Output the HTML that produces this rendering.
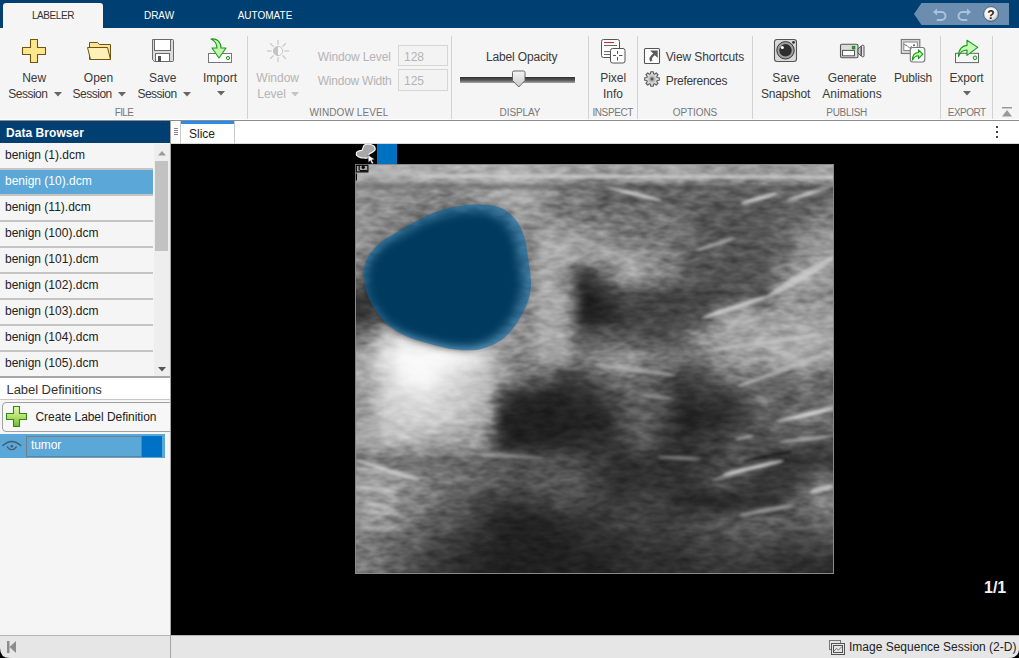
<!DOCTYPE html>
<html><head><meta charset="utf-8"><title>Medical Image Labeler</title>
<style>
html,body{margin:0;padding:0;}
body{width:1019px;height:658px;overflow:hidden;position:relative;background:#f5f5f5;font-family:"Liberation Sans", sans-serif;}
svg{display:block}
</style></head><body>
<div style="position:absolute;left:0px;top:0px;width:1019px;height:28px;background:#003f72"></div>
<div style="position:absolute;left:3px;top:3px;width:100px;height:25px;background:#f5f5f5;border-radius:3px 3px 0 0"></div>
<div style="position:absolute;left:-147.0px;width:400px;top:10.54px;font-size:10px;line-height:10px;color:#333;font-weight:normal;letter-spacing:-0.4px;text-align:center;white-space:nowrap;">LABELER</div>
<div style="position:absolute;left:-41.0px;width:400px;top:10.54px;font-size:10px;line-height:10px;color:#fff;font-weight:normal;letter-spacing:0px;text-align:center;white-space:nowrap;">DRAW</div>
<div style="position:absolute;left:65.0px;width:400px;top:10.54px;font-size:10px;line-height:10px;color:#fff;font-weight:normal;letter-spacing:0px;text-align:center;white-space:nowrap;">AUTOMATE</div>
<svg style="position:absolute;left:0;top:0" width="1019" height="28">
<polygon points="914,14 921.5,3 1009,3 1009,25 921.5,25" fill="#6a8db0"/>
<g fill="none" stroke="#a9c3db" stroke-width="2" stroke-linecap="round">
<path d="M935.5,12 h6 a4,4 0 0 1 0,8 h-4"/>
<path d="M968.5,12 h-6 a4,4 0 0 0 0,8 h4"/>
</g>
<path d="M933,12 l4,-3.5 v7z" fill="#a9c3db"/>
<path d="M971,12 l-4,-3.5 v7z" fill="#a9c3db"/>
<defs><radialGradient id="hg" cx="0.4" cy="0.35" r="0.7"><stop offset="0" stop-color="#ffffff"/><stop offset="0.7" stop-color="#e8e8e8"/><stop offset="1" stop-color="#9aa4ae"/></radialGradient></defs>
<circle cx="991" cy="14" r="7.3" fill="url(#hg)" stroke="#1d3550" stroke-width="0.6"/>
<text x="991" y="18.6" font-family="Liberation Sans" font-weight="bold" font-size="12" text-anchor="middle" fill="#222">?</text>
</svg>
<div style="position:absolute;left:0px;top:28px;width:1019px;height:92px;background:#f5f5f5"></div>
<div style="position:absolute;left:0px;top:119px;width:1019px;height:1px;background:#ffffff"></div>
<div style="position:absolute;left:0px;top:120px;width:1019px;height:1px;background:#8c8c8c"></div>
<div style="position:absolute;left:247px;top:36px;width:1px;height:83px;background:#d2d2d2"></div>
<div style="position:absolute;left:451px;top:36px;width:1px;height:83px;background:#d2d2d2"></div>
<div style="position:absolute;left:588px;top:36px;width:1px;height:83px;background:#d2d2d2"></div>
<div style="position:absolute;left:637px;top:36px;width:1px;height:83px;background:#d2d2d2"></div>
<div style="position:absolute;left:752px;top:36px;width:1px;height:83px;background:#d2d2d2"></div>
<div style="position:absolute;left:940px;top:36px;width:1px;height:83px;background:#d2d2d2"></div>
<div style="position:absolute;left:992px;top:36px;width:1px;height:83px;background:#d2d2d2"></div>
<div style="position:absolute;left:-76.0px;width:400px;top:108.23px;font-size:10px;line-height:10px;color:#777;font-weight:normal;letter-spacing:-0.6px;text-align:center;white-space:nowrap;">FILE</div>
<div style="position:absolute;left:149.0px;width:400px;top:108.23px;font-size:10px;line-height:10px;color:#777;font-weight:normal;letter-spacing:0.1px;text-align:center;white-space:nowrap;">WINDOW LEVEL</div>
<div style="position:absolute;left:320.0px;width:400px;top:108.23px;font-size:10px;line-height:10px;color:#777;font-weight:normal;letter-spacing:-0.1px;text-align:center;white-space:nowrap;">DISPLAY</div>
<div style="position:absolute;left:412.7px;width:400px;top:108.23px;font-size:10px;line-height:10px;color:#777;font-weight:normal;letter-spacing:-0.4px;text-align:center;white-space:nowrap;">INSPECT</div>
<div style="position:absolute;left:495.0px;width:400px;top:108.23px;font-size:10px;line-height:10px;color:#777;font-weight:normal;letter-spacing:-0.1px;text-align:center;white-space:nowrap;">OPTIONS</div>
<div style="position:absolute;left:646.7px;width:400px;top:108.23px;font-size:10px;line-height:10px;color:#777;font-weight:normal;letter-spacing:-0.3px;text-align:center;white-space:nowrap;">PUBLISH</div>
<div style="position:absolute;left:766.7px;width:400px;top:108.23px;font-size:10px;line-height:10px;color:#777;font-weight:normal;letter-spacing:-0.5px;text-align:center;white-space:nowrap;">EXPORT</div>
<div style="position:absolute;left:-165.8px;width:400px;top:71.64px;font-size:12px;line-height:12px;color:#3a3a3a;font-weight:normal;letter-spacing:0px;text-align:center;white-space:nowrap;">New</div>
<div style="position:absolute;left:-172.2px;width:400px;top:87.64px;font-size:12px;line-height:12px;color:#3a3a3a;font-weight:normal;letter-spacing:-0.5px;text-align:center;white-space:nowrap;">Session</div>
<svg style="position:absolute;left:54px;top:92px" width="9" height="5"><polygon points="0,0 8,0 4,4.5" fill="#666"/></svg>
<div style="position:absolute;left:-101.5px;width:400px;top:71.64px;font-size:12px;line-height:12px;color:#3a3a3a;font-weight:normal;letter-spacing:0px;text-align:center;white-space:nowrap;">Open</div>
<div style="position:absolute;left:-107.8px;width:400px;top:87.64px;font-size:12px;line-height:12px;color:#3a3a3a;font-weight:normal;letter-spacing:-0.5px;text-align:center;white-space:nowrap;">Session</div>
<svg style="position:absolute;left:118px;top:92px" width="9" height="5"><polygon points="0,0 8,0 4,4.5" fill="#666"/></svg>
<div style="position:absolute;left:-37.3px;width:400px;top:71.64px;font-size:12px;line-height:12px;color:#3a3a3a;font-weight:normal;letter-spacing:0px;text-align:center;white-space:nowrap;">Save</div>
<div style="position:absolute;left:-43.0px;width:400px;top:87.64px;font-size:12px;line-height:12px;color:#3a3a3a;font-weight:normal;letter-spacing:-0.5px;text-align:center;white-space:nowrap;">Session</div>
<svg style="position:absolute;left:183px;top:92px" width="9" height="5"><polygon points="0,0 8,0 4,4.5" fill="#666"/></svg>
<div style="position:absolute;left:20.0px;width:400px;top:71.64px;font-size:12px;line-height:12px;color:#3a3a3a;font-weight:normal;letter-spacing:0px;text-align:center;white-space:nowrap;">Import</div>
<svg style="position:absolute;left:217px;top:91px" width="9" height="5"><polygon points="0,0 8,0 4,4.5" fill="#666"/></svg>
<div style="position:absolute;left:77.7px;width:400px;top:71.64px;font-size:12px;line-height:12px;color:#b4b4b4;font-weight:normal;letter-spacing:0px;text-align:center;white-space:nowrap;">Window</div>
<div style="position:absolute;left:71.6px;width:400px;top:87.64px;font-size:12px;line-height:12px;color:#b4b4b4;font-weight:normal;letter-spacing:0px;text-align:center;white-space:nowrap;">Level</div>
<svg style="position:absolute;left:291px;top:92px" width="9" height="5"><polygon points="0,0 8,0 4,4.5" fill="#c4c4c4"/></svg>
<div style="position:absolute;left:317.8px;top:50.94px;font-size:12px;line-height:12px;color:#b4b4b4;font-weight:normal;letter-spacing:-0.15px;white-space:nowrap;">Window Level</div>
<div style="position:absolute;left:317.8px;top:74.84px;font-size:12px;line-height:12px;color:#b4b4b4;font-weight:normal;letter-spacing:-0.25px;white-space:nowrap;">Window Width</div>
<div style="position:absolute;left:398px;top:45px;width:50px;height:21px;border:1px solid #d6d6d6;box-sizing:border-box;background:#f3f3f3"></div>
<div style="position:absolute;left:398px;top:69px;width:50px;height:22px;border:1px solid #d6d6d6;box-sizing:border-box;background:#f3f3f3"></div>
<div style="position:absolute;left:404.0px;top:50.84px;font-size:12px;line-height:12px;color:#b4b4b4;font-weight:normal;letter-spacing:0px;white-space:nowrap;">128</div>
<div style="position:absolute;left:404.0px;top:74.84px;font-size:12px;line-height:12px;color:#b4b4b4;font-weight:normal;letter-spacing:0px;white-space:nowrap;">125</div>
<div style="position:absolute;left:321.7px;width:400px;top:51.04px;font-size:12px;line-height:12px;color:#3a3a3a;font-weight:normal;letter-spacing:-0.15px;text-align:center;white-space:nowrap;">Label Opacity</div>
<div style="position:absolute;left:413.2px;width:400px;top:71.64px;font-size:12px;line-height:12px;color:#3a3a3a;font-weight:normal;letter-spacing:0px;text-align:center;white-space:nowrap;">Pixel</div>
<div style="position:absolute;left:413.0px;width:400px;top:87.64px;font-size:12px;line-height:12px;color:#3a3a3a;font-weight:normal;letter-spacing:0px;text-align:center;white-space:nowrap;">Info</div>
<div style="position:absolute;left:665.7px;top:50.84px;font-size:12px;line-height:12px;color:#3a3a3a;font-weight:normal;letter-spacing:-0.1px;white-space:nowrap;">View Shortcuts</div>
<div style="position:absolute;left:665.7px;top:74.84px;font-size:12px;line-height:12px;color:#3a3a3a;font-weight:normal;letter-spacing:-0.3px;white-space:nowrap;">Preferences</div>
<div style="position:absolute;left:586.0px;width:400px;top:71.64px;font-size:12px;line-height:12px;color:#3a3a3a;font-weight:normal;letter-spacing:0px;text-align:center;white-space:nowrap;">Save</div>
<div style="position:absolute;left:585.5px;width:400px;top:87.64px;font-size:12px;line-height:12px;color:#3a3a3a;font-weight:normal;letter-spacing:-0.2px;text-align:center;white-space:nowrap;">Snapshot</div>
<div style="position:absolute;left:652.0px;width:400px;top:71.64px;font-size:12px;line-height:12px;color:#3a3a3a;font-weight:normal;letter-spacing:-0.2px;text-align:center;white-space:nowrap;">Generate</div>
<div style="position:absolute;left:652.0px;width:400px;top:87.64px;font-size:12px;line-height:12px;color:#3a3a3a;font-weight:normal;letter-spacing:0px;text-align:center;white-space:nowrap;">Animations</div>
<div style="position:absolute;left:713.0px;width:400px;top:71.64px;font-size:12px;line-height:12px;color:#3a3a3a;font-weight:normal;letter-spacing:-0.2px;text-align:center;white-space:nowrap;">Publish</div>
<div style="position:absolute;left:766.5px;width:400px;top:71.64px;font-size:12px;line-height:12px;color:#3a3a3a;font-weight:normal;letter-spacing:-0.1px;text-align:center;white-space:nowrap;">Export</div>
<svg style="position:absolute;left:963px;top:91px" width="9" height="5"><polygon points="0,0 8,0 4,4.5" fill="#666"/></svg>
<svg style="position:absolute;left:1000px;top:105px" width="14" height="14"><rect x="2" y="2" width="10" height="1.5" fill="#999"/><polygon points="2,11.5 12,11.5 7,5" fill="#999"/></svg>
<div style="position:absolute;left:0px;top:121px;width:170px;height:514px;background:#f5f5f5"></div>
<div style="position:absolute;left:0px;top:121px;width:170px;height:22px;background:#003f72"></div>
<div style="position:absolute;left:6.0px;top:126.84px;font-size:12px;line-height:12px;color:#fff;font-weight:bold;letter-spacing:0.05px;white-space:nowrap;">Data Browser</div>
<div style="position:absolute;left:0px;top:168px;width:153px;height:2px;background:#c4c4c4"></div>
<div style="position:absolute;left:5.0px;top:148.84px;font-size:12px;line-height:12px;color:#222;font-weight:normal;letter-spacing:0px;white-space:nowrap;">benign (1).dcm</div>
<div style="position:absolute;left:0px;top:170px;width:153px;height:24px;background:#5aa7d8"></div>
<div style="position:absolute;left:0px;top:194px;width:153px;height:2px;background:#c4c4c4"></div>
<div style="position:absolute;left:5.0px;top:174.84px;font-size:12px;line-height:12px;color:#fff;font-weight:normal;letter-spacing:0px;white-space:nowrap;">benign (10).dcm</div>
<div style="position:absolute;left:0px;top:220px;width:153px;height:2px;background:#c4c4c4"></div>
<div style="position:absolute;left:5.0px;top:200.84px;font-size:12px;line-height:12px;color:#222;font-weight:normal;letter-spacing:0px;white-space:nowrap;">benign (11).dcm</div>
<div style="position:absolute;left:0px;top:246px;width:153px;height:2px;background:#c4c4c4"></div>
<div style="position:absolute;left:5.0px;top:226.84px;font-size:12px;line-height:12px;color:#222;font-weight:normal;letter-spacing:0px;white-space:nowrap;">benign (100).dcm</div>
<div style="position:absolute;left:0px;top:272px;width:153px;height:2px;background:#c4c4c4"></div>
<div style="position:absolute;left:5.0px;top:252.84px;font-size:12px;line-height:12px;color:#222;font-weight:normal;letter-spacing:0px;white-space:nowrap;">benign (101).dcm</div>
<div style="position:absolute;left:0px;top:298px;width:153px;height:2px;background:#c4c4c4"></div>
<div style="position:absolute;left:5.0px;top:278.84px;font-size:12px;line-height:12px;color:#222;font-weight:normal;letter-spacing:0px;white-space:nowrap;">benign (102).dcm</div>
<div style="position:absolute;left:0px;top:324px;width:153px;height:2px;background:#c4c4c4"></div>
<div style="position:absolute;left:5.0px;top:304.84px;font-size:12px;line-height:12px;color:#222;font-weight:normal;letter-spacing:0px;white-space:nowrap;">benign (103).dcm</div>
<div style="position:absolute;left:0px;top:350px;width:153px;height:2px;background:#c4c4c4"></div>
<div style="position:absolute;left:5.0px;top:330.84px;font-size:12px;line-height:12px;color:#222;font-weight:normal;letter-spacing:0px;white-space:nowrap;">benign (104).dcm</div>
<div style="position:absolute;left:0px;top:376px;width:153px;height:2px;background:#c4c4c4"></div>
<div style="position:absolute;left:5.0px;top:356.84px;font-size:12px;line-height:12px;color:#222;font-weight:normal;letter-spacing:0px;white-space:nowrap;">benign (105).dcm</div>
<div style="position:absolute;left:154px;top:144px;width:16px;height:233px;background:#eeeeee"></div>
<div style="position:absolute;left:155px;top:161px;width:13px;height:90px;background:#c2c2c2"></div>
<svg style="position:absolute;left:157px;top:150px" width="10" height="7"><polygon points="1,5.5 9,5.5 5,1" fill="#9a9a9a"/></svg>
<svg style="position:absolute;left:157px;top:366px" width="10" height="7"><polygon points="1,1 9,1 5,5.5" fill="#555"/></svg>
<div style="position:absolute;left:0px;top:376px;width:170px;height:2px;background:#a8a8a8"></div>
<div style="position:absolute;left:0px;top:378px;width:170px;height:22px;background:#ffffff"></div>
<div style="position:absolute;left:0px;top:399px;width:170px;height:1px;background:#c8c8c8"></div>
<div style="position:absolute;left:6.5px;top:382.70px;font-size:13px;line-height:13px;color:#333;font-weight:normal;letter-spacing:-0.05px;white-space:nowrap;">Label Definitions</div>
<div style="position:absolute;left:2px;top:402px;width:180px;height:30px;border:1px solid #a0a0a0;border-radius:4px;box-sizing:border-box;background:#f7f7f7"></div>
<svg style="position:absolute;left:5px;top:405px" width="24" height="24">
<defs><linearGradient id="gp" x1="0" y1="0" x2="0" y2="1"><stop offset="0" stop-color="#e2f7b5"/><stop offset="0.5" stop-color="#b6e06a"/><stop offset="1" stop-color="#6cbc34"/></linearGradient></defs>
<path d="M8.5,1.5 h6 v7 h7 v6 h-7 v7 h-6 v-7 h-7 v-6 h7z" fill="url(#gp)" stroke="#2f8a1a" stroke-width="1.1"/>
</svg>
<div style="position:absolute;left:35.5px;top:410.84px;font-size:12px;line-height:12px;color:#222;font-weight:normal;letter-spacing:-0.05px;white-space:nowrap;">Create Label Definition</div>
<div style="position:absolute;left:0px;top:434px;width:165px;height:24px;background:#5aa7d8"></div>
<svg style="position:absolute;left:2px;top:438px" width="20" height="16">
<path d="M0.8,7.6 Q9.8,-0.6 18.8,7.6" fill="none" stroke="#45596b" stroke-width="1.3" stroke-linecap="round"/>
<path d="M5.3,9 Q9.8,14.5 14.3,9" fill="none" stroke="#45596b" stroke-width="1.2" stroke-linecap="round"/>
<circle cx="9.8" cy="8.2" r="1.3" fill="#45596b"/>
</svg>
<div style="position:absolute;left:26px;top:436px;width:116px;height:21px;border:1px solid #6f7f8a;box-sizing:border-box;background:#5aa7d8"></div>
<div style="position:absolute;left:142px;top:436px;width:20px;height:21px;background:#0072c6"></div>
<div style="position:absolute;left:31.0px;top:439.44px;font-size:12px;line-height:12px;color:#fff;font-weight:normal;letter-spacing:-0.1px;white-space:nowrap;">tumor</div>
<div style="position:absolute;left:170px;top:121px;width:1px;height:514px;background:#a6a6a6"></div>
<div style="position:absolute;left:171px;top:121px;width:848px;height:23px;background:#ffffff"></div>
<div style="position:absolute;left:171px;top:143px;width:848px;height:1px;background:#d8d8d8"></div>
<svg style="position:absolute;left:173px;top:127px" width="7" height="10"><g fill="#888"><rect x="1" y="1" width="4" height="1"/><rect x="1" y="3" width="4" height="1"/><rect x="1" y="5" width="4" height="1"/><rect x="1" y="7" width="4" height="1"/></g></svg>
<div style="position:absolute;left:180px;top:121px;width:1px;height:23px;background:#c8c8c8"></div>
<div style="position:absolute;left:234px;top:121px;width:1px;height:23px;background:#c8c8c8"></div>
<div style="position:absolute;left:181px;top:121px;width:53px;height:3px;background:#2a8ce4"></div>
<div style="position:absolute;left:189.0px;top:127.84px;font-size:12px;line-height:12px;color:#222;font-weight:normal;letter-spacing:0px;white-space:nowrap;">Slice</div>
<svg style="position:absolute;left:994px;top:125px" width="6" height="14"><g fill="#444"><rect x="2" y="1" width="2" height="2"/><rect x="2" y="6" width="2" height="2"/><rect x="2" y="11" width="2" height="2"/></g></svg>
<div style="position:absolute;left:171px;top:144px;width:848px;height:491px;background:#000"></div>
<div style="position:absolute;left:984.0px;top:579.86px;font-size:16px;line-height:16px;color:#f2f2f2;font-weight:bold;letter-spacing:0px;white-space:nowrap;">1/1</div>
<svg style="position:absolute;left:355px;top:164px" width="479" height="410" viewBox="0 0 479 410">
<defs>
<filter id="gblur" filterUnits="userSpaceOnUse" x="-80" y="-80" width="640" height="570" color-interpolation-filters="sRGB"><feGaussianBlur stdDeviation="7"/></filter>
<filter id="sblur" filterUnits="userSpaceOnUse" x="-20" y="-20" width="520" height="450" color-interpolation-filters="sRGB"><feGaussianBlur stdDeviation="1.8"/></filter>
<filter id="noise" filterUnits="userSpaceOnUse" x="0" y="0" width="478" height="409" color-interpolation-filters="sRGB">
<feTurbulence type="fractalNoise" baseFrequency="0.07 0.15" numOctaves="2" seed="7"/>
<feColorMatrix type="matrix" values="1.1 0 0 0 -0.05  1.1 0 0 0 -0.05  1.1 0 0 0 -0.05  0 0 0 0 1"/>
</filter>
<clipPath id="imgclip"><rect x="0" y="0" width="478" height="409"/></clipPath>
<clipPath id="blobclip"><path d="M125.0,40.4 C131.6,40.6 138.5,40.7 144.5,43.3 C150.5,45.9 156.8,50.8 161.0,56.0 C165.2,61.2 167.8,68.6 169.8,74.8 C171.8,81.1 172.0,86.2 173.0,93.5 C174.0,100.8 176.0,111.1 176.0,118.4 C176.0,125.6 175.3,130.2 173.0,137.0 C170.7,143.8 166.4,152.5 162.0,159.0 C157.6,165.5 152.7,171.6 146.5,176.0 C140.3,180.4 132.4,183.8 124.6,185.4 C116.8,187.0 107.5,186.2 99.7,185.4 C91.9,184.6 85.7,182.8 77.9,180.7 C70.1,178.6 60.3,176.1 53.0,173.0 C45.7,169.9 39.5,166.2 34.3,162.0 C29.1,157.8 25.4,153.2 21.8,148.0 C18.2,142.8 14.7,137.4 12.5,130.9 C10.3,124.4 8.6,115.3 8.7,109.0 C8.8,102.7 10.1,98.2 13.0,93.0 C15.9,87.8 20.7,82.4 26.0,78.0 C31.3,73.6 38.5,70.3 45.0,66.5 C51.5,62.7 58.3,58.3 65.0,55.0 C71.7,51.7 78.3,48.7 85.0,46.5 C91.7,44.3 98.3,43.0 105.0,42.0 C111.7,41.0 118.4,40.2 125.0,40.4Z"/></clipPath>
<filter id="bblur" filterUnits="userSpaceOnUse" x="-50" y="-50" width="580" height="510" color-interpolation-filters="sRGB"><feGaussianBlur stdDeviation="5"/></filter>
</defs>
<g clip-path="url(#imgclip)">
<g filter="url(#gblur)"><rect x="-59.75" y="-61.35" width="20.52" height="21.05" fill="rgb(168,168,168)"/><rect x="-39.83" y="-61.35" width="20.52" height="21.05" fill="rgb(168,168,168)"/><rect x="-19.92" y="-61.35" width="20.52" height="21.05" fill="rgb(168,168,168)"/><rect x="0.00" y="-61.35" width="20.52" height="21.05" fill="rgb(168,168,168)"/><rect x="19.92" y="-61.35" width="20.52" height="21.05" fill="rgb(174,174,174)"/><rect x="39.83" y="-61.35" width="20.52" height="21.05" fill="rgb(174,174,174)"/><rect x="59.75" y="-61.35" width="20.52" height="21.05" fill="rgb(174,174,174)"/><rect x="79.67" y="-61.35" width="20.52" height="21.05" fill="rgb(168,168,168)"/><rect x="99.58" y="-61.35" width="20.52" height="21.05" fill="rgb(168,168,168)"/><rect x="119.50" y="-61.35" width="20.52" height="21.05" fill="rgb(174,174,174)"/><rect x="139.42" y="-61.35" width="20.52" height="21.05" fill="rgb(174,174,174)"/><rect x="159.33" y="-61.35" width="20.52" height="21.05" fill="rgb(174,174,174)"/><rect x="179.25" y="-61.35" width="20.52" height="21.05" fill="rgb(168,168,168)"/><rect x="199.17" y="-61.35" width="20.52" height="21.05" fill="rgb(163,163,163)"/><rect x="219.08" y="-61.35" width="20.52" height="21.05" fill="rgb(152,152,152)"/><rect x="239.00" y="-61.35" width="20.52" height="21.05" fill="rgb(152,152,152)"/><rect x="258.92" y="-61.35" width="20.52" height="21.05" fill="rgb(152,152,152)"/><rect x="278.83" y="-61.35" width="20.52" height="21.05" fill="rgb(163,163,163)"/><rect x="298.75" y="-61.35" width="20.52" height="21.05" fill="rgb(163,163,163)"/><rect x="318.67" y="-61.35" width="20.52" height="21.05" fill="rgb(163,163,163)"/><rect x="338.58" y="-61.35" width="20.52" height="21.05" fill="rgb(157,157,157)"/><rect x="358.50" y="-61.35" width="20.52" height="21.05" fill="rgb(152,152,152)"/><rect x="378.42" y="-61.35" width="20.52" height="21.05" fill="rgb(152,152,152)"/><rect x="398.33" y="-61.35" width="20.52" height="21.05" fill="rgb(152,152,152)"/><rect x="418.25" y="-61.35" width="20.52" height="21.05" fill="rgb(152,152,152)"/><rect x="438.17" y="-61.35" width="20.52" height="21.05" fill="rgb(152,152,152)"/><rect x="458.08" y="-61.35" width="20.52" height="21.05" fill="rgb(163,163,163)"/><rect x="478.00" y="-61.35" width="20.52" height="21.05" fill="rgb(163,163,163)"/><rect x="497.92" y="-61.35" width="20.52" height="21.05" fill="rgb(163,163,163)"/><rect x="517.83" y="-61.35" width="20.52" height="21.05" fill="rgb(163,163,163)"/><rect x="-59.75" y="-40.90" width="20.52" height="21.05" fill="rgb(168,168,168)"/><rect x="-39.83" y="-40.90" width="20.52" height="21.05" fill="rgb(168,168,168)"/><rect x="-19.92" y="-40.90" width="20.52" height="21.05" fill="rgb(168,168,168)"/><rect x="0.00" y="-40.90" width="20.52" height="21.05" fill="rgb(168,168,168)"/><rect x="19.92" y="-40.90" width="20.52" height="21.05" fill="rgb(174,174,174)"/><rect x="39.83" y="-40.90" width="20.52" height="21.05" fill="rgb(174,174,174)"/><rect x="59.75" y="-40.90" width="20.52" height="21.05" fill="rgb(174,174,174)"/><rect x="79.67" y="-40.90" width="20.52" height="21.05" fill="rgb(168,168,168)"/><rect x="99.58" y="-40.90" width="20.52" height="21.05" fill="rgb(168,168,168)"/><rect x="119.50" y="-40.90" width="20.52" height="21.05" fill="rgb(174,174,174)"/><rect x="139.42" y="-40.90" width="20.52" height="21.05" fill="rgb(174,174,174)"/><rect x="159.33" y="-40.90" width="20.52" height="21.05" fill="rgb(174,174,174)"/><rect x="179.25" y="-40.90" width="20.52" height="21.05" fill="rgb(168,168,168)"/><rect x="199.17" y="-40.90" width="20.52" height="21.05" fill="rgb(163,163,163)"/><rect x="219.08" y="-40.90" width="20.52" height="21.05" fill="rgb(152,152,152)"/><rect x="239.00" y="-40.90" width="20.52" height="21.05" fill="rgb(152,152,152)"/><rect x="258.92" y="-40.90" width="20.52" height="21.05" fill="rgb(152,152,152)"/><rect x="278.83" y="-40.90" width="20.52" height="21.05" fill="rgb(163,163,163)"/><rect x="298.75" y="-40.90" width="20.52" height="21.05" fill="rgb(163,163,163)"/><rect x="318.67" y="-40.90" width="20.52" height="21.05" fill="rgb(163,163,163)"/><rect x="338.58" y="-40.90" width="20.52" height="21.05" fill="rgb(157,157,157)"/><rect x="358.50" y="-40.90" width="20.52" height="21.05" fill="rgb(152,152,152)"/><rect x="378.42" y="-40.90" width="20.52" height="21.05" fill="rgb(152,152,152)"/><rect x="398.33" y="-40.90" width="20.52" height="21.05" fill="rgb(152,152,152)"/><rect x="418.25" y="-40.90" width="20.52" height="21.05" fill="rgb(152,152,152)"/><rect x="438.17" y="-40.90" width="20.52" height="21.05" fill="rgb(152,152,152)"/><rect x="458.08" y="-40.90" width="20.52" height="21.05" fill="rgb(163,163,163)"/><rect x="478.00" y="-40.90" width="20.52" height="21.05" fill="rgb(163,163,163)"/><rect x="497.92" y="-40.90" width="20.52" height="21.05" fill="rgb(163,163,163)"/><rect x="517.83" y="-40.90" width="20.52" height="21.05" fill="rgb(163,163,163)"/><rect x="-59.75" y="-20.45" width="20.52" height="21.05" fill="rgb(168,168,168)"/><rect x="-39.83" y="-20.45" width="20.52" height="21.05" fill="rgb(168,168,168)"/><rect x="-19.92" y="-20.45" width="20.52" height="21.05" fill="rgb(168,168,168)"/><rect x="0.00" y="-20.45" width="20.52" height="21.05" fill="rgb(168,168,168)"/><rect x="19.92" y="-20.45" width="20.52" height="21.05" fill="rgb(174,174,174)"/><rect x="39.83" y="-20.45" width="20.52" height="21.05" fill="rgb(174,174,174)"/><rect x="59.75" y="-20.45" width="20.52" height="21.05" fill="rgb(174,174,174)"/><rect x="79.67" y="-20.45" width="20.52" height="21.05" fill="rgb(168,168,168)"/><rect x="99.58" y="-20.45" width="20.52" height="21.05" fill="rgb(168,168,168)"/><rect x="119.50" y="-20.45" width="20.52" height="21.05" fill="rgb(174,174,174)"/><rect x="139.42" y="-20.45" width="20.52" height="21.05" fill="rgb(174,174,174)"/><rect x="159.33" y="-20.45" width="20.52" height="21.05" fill="rgb(174,174,174)"/><rect x="179.25" y="-20.45" width="20.52" height="21.05" fill="rgb(168,168,168)"/><rect x="199.17" y="-20.45" width="20.52" height="21.05" fill="rgb(163,163,163)"/><rect x="219.08" y="-20.45" width="20.52" height="21.05" fill="rgb(152,152,152)"/><rect x="239.00" y="-20.45" width="20.52" height="21.05" fill="rgb(152,152,152)"/><rect x="258.92" y="-20.45" width="20.52" height="21.05" fill="rgb(152,152,152)"/><rect x="278.83" y="-20.45" width="20.52" height="21.05" fill="rgb(163,163,163)"/><rect x="298.75" y="-20.45" width="20.52" height="21.05" fill="rgb(163,163,163)"/><rect x="318.67" y="-20.45" width="20.52" height="21.05" fill="rgb(163,163,163)"/><rect x="338.58" y="-20.45" width="20.52" height="21.05" fill="rgb(157,157,157)"/><rect x="358.50" y="-20.45" width="20.52" height="21.05" fill="rgb(152,152,152)"/><rect x="378.42" y="-20.45" width="20.52" height="21.05" fill="rgb(152,152,152)"/><rect x="398.33" y="-20.45" width="20.52" height="21.05" fill="rgb(152,152,152)"/><rect x="418.25" y="-20.45" width="20.52" height="21.05" fill="rgb(152,152,152)"/><rect x="438.17" y="-20.45" width="20.52" height="21.05" fill="rgb(152,152,152)"/><rect x="458.08" y="-20.45" width="20.52" height="21.05" fill="rgb(163,163,163)"/><rect x="478.00" y="-20.45" width="20.52" height="21.05" fill="rgb(163,163,163)"/><rect x="497.92" y="-20.45" width="20.52" height="21.05" fill="rgb(163,163,163)"/><rect x="517.83" y="-20.45" width="20.52" height="21.05" fill="rgb(163,163,163)"/><rect x="-59.75" y="0.00" width="20.52" height="21.05" fill="rgb(168,168,168)"/><rect x="-39.83" y="0.00" width="20.52" height="21.05" fill="rgb(168,168,168)"/><rect x="-19.92" y="0.00" width="20.52" height="21.05" fill="rgb(168,168,168)"/><rect x="0.00" y="0.00" width="20.52" height="21.05" fill="rgb(168,168,168)"/><rect x="19.92" y="0.00" width="20.52" height="21.05" fill="rgb(174,174,174)"/><rect x="39.83" y="0.00" width="20.52" height="21.05" fill="rgb(174,174,174)"/><rect x="59.75" y="0.00" width="20.52" height="21.05" fill="rgb(174,174,174)"/><rect x="79.67" y="0.00" width="20.52" height="21.05" fill="rgb(168,168,168)"/><rect x="99.58" y="0.00" width="20.52" height="21.05" fill="rgb(168,168,168)"/><rect x="119.50" y="0.00" width="20.52" height="21.05" fill="rgb(174,174,174)"/><rect x="139.42" y="0.00" width="20.52" height="21.05" fill="rgb(174,174,174)"/><rect x="159.33" y="0.00" width="20.52" height="21.05" fill="rgb(174,174,174)"/><rect x="179.25" y="0.00" width="20.52" height="21.05" fill="rgb(168,168,168)"/><rect x="199.17" y="0.00" width="20.52" height="21.05" fill="rgb(163,163,163)"/><rect x="219.08" y="0.00" width="20.52" height="21.05" fill="rgb(152,152,152)"/><rect x="239.00" y="0.00" width="20.52" height="21.05" fill="rgb(152,152,152)"/><rect x="258.92" y="0.00" width="20.52" height="21.05" fill="rgb(152,152,152)"/><rect x="278.83" y="0.00" width="20.52" height="21.05" fill="rgb(163,163,163)"/><rect x="298.75" y="0.00" width="20.52" height="21.05" fill="rgb(163,163,163)"/><rect x="318.67" y="0.00" width="20.52" height="21.05" fill="rgb(163,163,163)"/><rect x="338.58" y="0.00" width="20.52" height="21.05" fill="rgb(157,157,157)"/><rect x="358.50" y="0.00" width="20.52" height="21.05" fill="rgb(152,152,152)"/><rect x="378.42" y="0.00" width="20.52" height="21.05" fill="rgb(152,152,152)"/><rect x="398.33" y="0.00" width="20.52" height="21.05" fill="rgb(152,152,152)"/><rect x="418.25" y="0.00" width="20.52" height="21.05" fill="rgb(152,152,152)"/><rect x="438.17" y="0.00" width="20.52" height="21.05" fill="rgb(152,152,152)"/><rect x="458.08" y="0.00" width="20.52" height="21.05" fill="rgb(163,163,163)"/><rect x="478.00" y="0.00" width="20.52" height="21.05" fill="rgb(163,163,163)"/><rect x="497.92" y="0.00" width="20.52" height="21.05" fill="rgb(163,163,163)"/><rect x="517.83" y="0.00" width="20.52" height="21.05" fill="rgb(163,163,163)"/><rect x="-59.75" y="20.45" width="20.52" height="21.05" fill="rgb(141,141,141)"/><rect x="-39.83" y="20.45" width="20.52" height="21.05" fill="rgb(141,141,141)"/><rect x="-19.92" y="20.45" width="20.52" height="21.05" fill="rgb(141,141,141)"/><rect x="0.00" y="20.45" width="20.52" height="21.05" fill="rgb(141,141,141)"/><rect x="19.92" y="20.45" width="20.52" height="21.05" fill="rgb(146,146,146)"/><rect x="39.83" y="20.45" width="20.52" height="21.05" fill="rgb(141,141,141)"/><rect x="59.75" y="20.45" width="20.52" height="21.05" fill="rgb(130,130,130)"/><rect x="79.67" y="20.45" width="20.52" height="21.05" fill="rgb(130,130,130)"/><rect x="99.58" y="20.45" width="20.52" height="21.05" fill="rgb(141,141,141)"/><rect x="119.50" y="20.45" width="20.52" height="21.05" fill="rgb(152,152,152)"/><rect x="139.42" y="20.45" width="20.52" height="21.05" fill="rgb(174,174,174)"/><rect x="159.33" y="20.45" width="20.52" height="21.05" fill="rgb(174,174,174)"/><rect x="179.25" y="20.45" width="20.52" height="21.05" fill="rgb(141,141,141)"/><rect x="199.17" y="20.45" width="20.52" height="21.05" fill="rgb(119,119,119)"/><rect x="219.08" y="20.45" width="20.52" height="21.05" fill="rgb(119,119,119)"/><rect x="239.00" y="20.45" width="20.52" height="21.05" fill="rgb(91,91,91)"/><rect x="258.92" y="20.45" width="20.52" height="21.05" fill="rgb(91,91,91)"/><rect x="278.83" y="20.45" width="20.52" height="21.05" fill="rgb(95,95,95)"/><rect x="298.75" y="20.45" width="20.52" height="21.05" fill="rgb(91,91,91)"/><rect x="318.67" y="20.45" width="20.52" height="21.05" fill="rgb(91,91,91)"/><rect x="338.58" y="20.45" width="20.52" height="21.05" fill="rgb(95,95,95)"/><rect x="358.50" y="20.45" width="20.52" height="21.05" fill="rgb(95,95,95)"/><rect x="378.42" y="20.45" width="20.52" height="21.05" fill="rgb(95,95,95)"/><rect x="398.33" y="20.45" width="20.52" height="21.05" fill="rgb(95,95,95)"/><rect x="418.25" y="20.45" width="20.52" height="21.05" fill="rgb(95,95,95)"/><rect x="438.17" y="20.45" width="20.52" height="21.05" fill="rgb(95,95,95)"/><rect x="458.08" y="20.45" width="20.52" height="21.05" fill="rgb(95,95,95)"/><rect x="478.00" y="20.45" width="20.52" height="21.05" fill="rgb(95,95,95)"/><rect x="497.92" y="20.45" width="20.52" height="21.05" fill="rgb(95,95,95)"/><rect x="517.83" y="20.45" width="20.52" height="21.05" fill="rgb(95,95,95)"/><rect x="-59.75" y="40.90" width="20.52" height="21.05" fill="rgb(141,141,141)"/><rect x="-39.83" y="40.90" width="20.52" height="21.05" fill="rgb(141,141,141)"/><rect x="-19.92" y="40.90" width="20.52" height="21.05" fill="rgb(141,141,141)"/><rect x="0.00" y="40.90" width="20.52" height="21.05" fill="rgb(141,141,141)"/><rect x="19.92" y="40.90" width="20.52" height="21.05" fill="rgb(141,141,141)"/><rect x="39.83" y="40.90" width="20.52" height="21.05" fill="rgb(130,130,130)"/><rect x="59.75" y="40.90" width="20.52" height="21.05" fill="rgb(119,119,119)"/><rect x="79.67" y="40.90" width="20.52" height="21.05" fill="rgb(119,119,119)"/><rect x="99.58" y="40.90" width="20.52" height="21.05" fill="rgb(119,119,119)"/><rect x="119.50" y="40.90" width="20.52" height="21.05" fill="rgb(119,119,119)"/><rect x="139.42" y="40.90" width="20.52" height="21.05" fill="rgb(130,130,130)"/><rect x="159.33" y="40.90" width="20.52" height="21.05" fill="rgb(152,152,152)"/><rect x="179.25" y="40.90" width="20.52" height="21.05" fill="rgb(141,141,141)"/><rect x="199.17" y="40.90" width="20.52" height="21.05" fill="rgb(119,119,119)"/><rect x="219.08" y="40.90" width="20.52" height="21.05" fill="rgb(119,119,119)"/><rect x="239.00" y="40.90" width="20.52" height="21.05" fill="rgb(119,119,119)"/><rect x="258.92" y="40.90" width="20.52" height="21.05" fill="rgb(119,119,119)"/><rect x="278.83" y="40.90" width="20.52" height="21.05" fill="rgb(110,110,110)"/><rect x="298.75" y="40.90" width="20.52" height="21.05" fill="rgb(115,115,115)"/><rect x="318.67" y="40.90" width="20.52" height="21.05" fill="rgb(110,110,110)"/><rect x="338.58" y="40.90" width="20.52" height="21.05" fill="rgb(86,86,86)"/><rect x="358.50" y="40.90" width="20.52" height="21.05" fill="rgb(86,86,86)"/><rect x="378.42" y="40.90" width="20.52" height="21.05" fill="rgb(86,86,86)"/><rect x="398.33" y="40.90" width="20.52" height="21.05" fill="rgb(86,86,86)"/><rect x="418.25" y="40.90" width="20.52" height="21.05" fill="rgb(99,99,99)"/><rect x="438.17" y="40.90" width="20.52" height="21.05" fill="rgb(99,99,99)"/><rect x="458.08" y="40.90" width="20.52" height="21.05" fill="rgb(121,121,121)"/><rect x="478.00" y="40.90" width="20.52" height="21.05" fill="rgb(121,121,121)"/><rect x="497.92" y="40.90" width="20.52" height="21.05" fill="rgb(121,121,121)"/><rect x="517.83" y="40.90" width="20.52" height="21.05" fill="rgb(121,121,121)"/><rect x="-59.75" y="61.35" width="20.52" height="21.05" fill="rgb(152,152,152)"/><rect x="-39.83" y="61.35" width="20.52" height="21.05" fill="rgb(152,152,152)"/><rect x="-19.92" y="61.35" width="20.52" height="21.05" fill="rgb(152,152,152)"/><rect x="0.00" y="61.35" width="20.52" height="21.05" fill="rgb(152,152,152)"/><rect x="19.92" y="61.35" width="20.52" height="21.05" fill="rgb(130,130,130)"/><rect x="39.83" y="61.35" width="20.52" height="21.05" fill="rgb(119,119,119)"/><rect x="59.75" y="61.35" width="20.52" height="21.05" fill="rgb(119,119,119)"/><rect x="79.67" y="61.35" width="20.52" height="21.05" fill="rgb(119,119,119)"/><rect x="99.58" y="61.35" width="20.52" height="21.05" fill="rgb(119,119,119)"/><rect x="119.50" y="61.35" width="20.52" height="21.05" fill="rgb(119,119,119)"/><rect x="139.42" y="61.35" width="20.52" height="21.05" fill="rgb(119,119,119)"/><rect x="159.33" y="61.35" width="20.52" height="21.05" fill="rgb(130,130,130)"/><rect x="179.25" y="61.35" width="20.52" height="21.05" fill="rgb(163,163,163)"/><rect x="199.17" y="61.35" width="20.52" height="21.05" fill="rgb(163,163,163)"/><rect x="219.08" y="61.35" width="20.52" height="21.05" fill="rgb(152,152,152)"/><rect x="239.00" y="61.35" width="20.52" height="21.05" fill="rgb(130,130,130)"/><rect x="258.92" y="61.35" width="20.52" height="21.05" fill="rgb(119,119,119)"/><rect x="278.83" y="61.35" width="20.52" height="21.05" fill="rgb(110,110,110)"/><rect x="298.75" y="61.35" width="20.52" height="21.05" fill="rgb(121,121,121)"/><rect x="318.67" y="61.35" width="20.52" height="21.05" fill="rgb(110,110,110)"/><rect x="338.58" y="61.35" width="20.52" height="21.05" fill="rgb(86,86,86)"/><rect x="358.50" y="61.35" width="20.52" height="21.05" fill="rgb(86,86,86)"/><rect x="378.42" y="61.35" width="20.52" height="21.05" fill="rgb(86,86,86)"/><rect x="398.33" y="61.35" width="20.52" height="21.05" fill="rgb(86,86,86)"/><rect x="418.25" y="61.35" width="20.52" height="21.05" fill="rgb(99,99,99)"/><rect x="438.17" y="61.35" width="20.52" height="21.05" fill="rgb(141,141,141)"/><rect x="458.08" y="61.35" width="20.52" height="21.05" fill="rgb(152,152,152)"/><rect x="478.00" y="61.35" width="20.52" height="21.05" fill="rgb(152,152,152)"/><rect x="497.92" y="61.35" width="20.52" height="21.05" fill="rgb(152,152,152)"/><rect x="517.83" y="61.35" width="20.52" height="21.05" fill="rgb(152,152,152)"/><rect x="-59.75" y="81.80" width="20.52" height="21.05" fill="rgb(141,141,141)"/><rect x="-39.83" y="81.80" width="20.52" height="21.05" fill="rgb(141,141,141)"/><rect x="-19.92" y="81.80" width="20.52" height="21.05" fill="rgb(141,141,141)"/><rect x="0.00" y="81.80" width="20.52" height="21.05" fill="rgb(141,141,141)"/><rect x="19.92" y="81.80" width="20.52" height="21.05" fill="rgb(119,119,119)"/><rect x="39.83" y="81.80" width="20.52" height="21.05" fill="rgb(119,119,119)"/><rect x="59.75" y="81.80" width="20.52" height="21.05" fill="rgb(119,119,119)"/><rect x="79.67" y="81.80" width="20.52" height="21.05" fill="rgb(119,119,119)"/><rect x="99.58" y="81.80" width="20.52" height="21.05" fill="rgb(119,119,119)"/><rect x="119.50" y="81.80" width="20.52" height="21.05" fill="rgb(119,119,119)"/><rect x="139.42" y="81.80" width="20.52" height="21.05" fill="rgb(119,119,119)"/><rect x="159.33" y="81.80" width="20.52" height="21.05" fill="rgb(119,119,119)"/><rect x="179.25" y="81.80" width="20.52" height="21.05" fill="rgb(174,174,174)"/><rect x="199.17" y="81.80" width="20.52" height="21.05" fill="rgb(174,174,174)"/><rect x="219.08" y="81.80" width="20.52" height="21.05" fill="rgb(163,163,163)"/><rect x="239.00" y="81.80" width="20.52" height="21.05" fill="rgb(163,163,163)"/><rect x="258.92" y="81.80" width="20.52" height="21.05" fill="rgb(163,163,163)"/><rect x="278.83" y="81.80" width="20.52" height="21.05" fill="rgb(152,152,152)"/><rect x="298.75" y="81.80" width="20.52" height="21.05" fill="rgb(130,130,130)"/><rect x="318.67" y="81.80" width="20.52" height="21.05" fill="rgb(99,99,99)"/><rect x="338.58" y="81.80" width="20.52" height="21.05" fill="rgb(86,86,86)"/><rect x="358.50" y="81.80" width="20.52" height="21.05" fill="rgb(86,86,86)"/><rect x="378.42" y="81.80" width="20.52" height="21.05" fill="rgb(86,86,86)"/><rect x="398.33" y="81.80" width="20.52" height="21.05" fill="rgb(86,86,86)"/><rect x="418.25" y="81.80" width="20.52" height="21.05" fill="rgb(99,99,99)"/><rect x="438.17" y="81.80" width="20.52" height="21.05" fill="rgb(141,141,141)"/><rect x="458.08" y="81.80" width="20.52" height="21.05" fill="rgb(154,154,154)"/><rect x="478.00" y="81.80" width="20.52" height="21.05" fill="rgb(154,154,154)"/><rect x="497.92" y="81.80" width="20.52" height="21.05" fill="rgb(154,154,154)"/><rect x="517.83" y="81.80" width="20.52" height="21.05" fill="rgb(154,154,154)"/><rect x="-59.75" y="102.25" width="20.52" height="21.05" fill="rgb(119,119,119)"/><rect x="-39.83" y="102.25" width="20.52" height="21.05" fill="rgb(119,119,119)"/><rect x="-19.92" y="102.25" width="20.52" height="21.05" fill="rgb(119,119,119)"/><rect x="0.00" y="102.25" width="20.52" height="21.05" fill="rgb(119,119,119)"/><rect x="19.92" y="102.25" width="20.52" height="21.05" fill="rgb(108,108,108)"/><rect x="39.83" y="102.25" width="20.52" height="21.05" fill="rgb(119,119,119)"/><rect x="59.75" y="102.25" width="20.52" height="21.05" fill="rgb(119,119,119)"/><rect x="79.67" y="102.25" width="20.52" height="21.05" fill="rgb(119,119,119)"/><rect x="99.58" y="102.25" width="20.52" height="21.05" fill="rgb(119,119,119)"/><rect x="119.50" y="102.25" width="20.52" height="21.05" fill="rgb(119,119,119)"/><rect x="139.42" y="102.25" width="20.52" height="21.05" fill="rgb(119,119,119)"/><rect x="159.33" y="102.25" width="20.52" height="21.05" fill="rgb(119,119,119)"/><rect x="179.25" y="102.25" width="20.52" height="21.05" fill="rgb(174,174,174)"/><rect x="199.17" y="102.25" width="20.52" height="21.05" fill="rgb(141,141,141)"/><rect x="219.08" y="102.25" width="20.52" height="21.05" fill="rgb(42,42,42)"/><rect x="239.00" y="102.25" width="20.52" height="21.05" fill="rgb(86,86,86)"/><rect x="258.92" y="102.25" width="20.52" height="21.05" fill="rgb(163,163,163)"/><rect x="278.83" y="102.25" width="20.52" height="21.05" fill="rgb(152,152,152)"/><rect x="298.75" y="102.25" width="20.52" height="21.05" fill="rgb(130,130,130)"/><rect x="318.67" y="102.25" width="20.52" height="21.05" fill="rgb(99,99,99)"/><rect x="338.58" y="102.25" width="20.52" height="21.05" fill="rgb(82,82,82)"/><rect x="358.50" y="102.25" width="20.52" height="21.05" fill="rgb(82,82,82)"/><rect x="378.42" y="102.25" width="20.52" height="21.05" fill="rgb(82,82,82)"/><rect x="398.33" y="102.25" width="20.52" height="21.05" fill="rgb(86,86,86)"/><rect x="418.25" y="102.25" width="20.52" height="21.05" fill="rgb(132,132,132)"/><rect x="438.17" y="102.25" width="20.52" height="21.05" fill="rgb(176,176,176)"/><rect x="458.08" y="102.25" width="20.52" height="21.05" fill="rgb(154,154,154)"/><rect x="478.00" y="102.25" width="20.52" height="21.05" fill="rgb(154,154,154)"/><rect x="497.92" y="102.25" width="20.52" height="21.05" fill="rgb(154,154,154)"/><rect x="517.83" y="102.25" width="20.52" height="21.05" fill="rgb(154,154,154)"/><rect x="-59.75" y="122.70" width="20.52" height="21.05" fill="rgb(53,53,53)"/><rect x="-39.83" y="122.70" width="20.52" height="21.05" fill="rgb(53,53,53)"/><rect x="-19.92" y="122.70" width="20.52" height="21.05" fill="rgb(53,53,53)"/><rect x="0.00" y="122.70" width="20.52" height="21.05" fill="rgb(53,53,53)"/><rect x="19.92" y="122.70" width="20.52" height="21.05" fill="rgb(97,97,97)"/><rect x="39.83" y="122.70" width="20.52" height="21.05" fill="rgb(119,119,119)"/><rect x="59.75" y="122.70" width="20.52" height="21.05" fill="rgb(119,119,119)"/><rect x="79.67" y="122.70" width="20.52" height="21.05" fill="rgb(119,119,119)"/><rect x="99.58" y="122.70" width="20.52" height="21.05" fill="rgb(119,119,119)"/><rect x="119.50" y="122.70" width="20.52" height="21.05" fill="rgb(119,119,119)"/><rect x="139.42" y="122.70" width="20.52" height="21.05" fill="rgb(119,119,119)"/><rect x="159.33" y="122.70" width="20.52" height="21.05" fill="rgb(119,119,119)"/><rect x="179.25" y="122.70" width="20.52" height="21.05" fill="rgb(174,174,174)"/><rect x="199.17" y="122.70" width="20.52" height="21.05" fill="rgb(163,163,163)"/><rect x="219.08" y="122.70" width="20.52" height="21.05" fill="rgb(32,32,32)"/><rect x="239.00" y="122.70" width="20.52" height="21.05" fill="rgb(42,42,42)"/><rect x="258.92" y="122.70" width="20.52" height="21.05" fill="rgb(75,75,75)"/><rect x="278.83" y="122.70" width="20.52" height="21.05" fill="rgb(69,69,69)"/><rect x="298.75" y="122.70" width="20.52" height="21.05" fill="rgb(64,64,64)"/><rect x="318.67" y="122.70" width="20.52" height="21.05" fill="rgb(64,64,64)"/><rect x="338.58" y="122.70" width="20.52" height="21.05" fill="rgb(69,69,69)"/><rect x="358.50" y="122.70" width="20.52" height="21.05" fill="rgb(77,77,77)"/><rect x="378.42" y="122.70" width="20.52" height="21.05" fill="rgb(86,86,86)"/><rect x="398.33" y="122.70" width="20.52" height="21.05" fill="rgb(86,86,86)"/><rect x="418.25" y="122.70" width="20.52" height="21.05" fill="rgb(154,154,154)"/><rect x="438.17" y="122.70" width="20.52" height="21.05" fill="rgb(143,143,143)"/><rect x="458.08" y="122.70" width="20.52" height="21.05" fill="rgb(143,143,143)"/><rect x="478.00" y="122.70" width="20.52" height="21.05" fill="rgb(143,143,143)"/><rect x="497.92" y="122.70" width="20.52" height="21.05" fill="rgb(143,143,143)"/><rect x="517.83" y="122.70" width="20.52" height="21.05" fill="rgb(143,143,143)"/><rect x="-59.75" y="143.15" width="20.52" height="21.05" fill="rgb(53,53,53)"/><rect x="-39.83" y="143.15" width="20.52" height="21.05" fill="rgb(53,53,53)"/><rect x="-19.92" y="143.15" width="20.52" height="21.05" fill="rgb(53,53,53)"/><rect x="0.00" y="143.15" width="20.52" height="21.05" fill="rgb(53,53,53)"/><rect x="19.92" y="143.15" width="20.52" height="21.05" fill="rgb(108,108,108)"/><rect x="39.83" y="143.15" width="20.52" height="21.05" fill="rgb(119,119,119)"/><rect x="59.75" y="143.15" width="20.52" height="21.05" fill="rgb(119,119,119)"/><rect x="79.67" y="143.15" width="20.52" height="21.05" fill="rgb(119,119,119)"/><rect x="99.58" y="143.15" width="20.52" height="21.05" fill="rgb(119,119,119)"/><rect x="119.50" y="143.15" width="20.52" height="21.05" fill="rgb(119,119,119)"/><rect x="139.42" y="143.15" width="20.52" height="21.05" fill="rgb(119,119,119)"/><rect x="159.33" y="143.15" width="20.52" height="21.05" fill="rgb(130,130,130)"/><rect x="179.25" y="143.15" width="20.52" height="21.05" fill="rgb(174,174,174)"/><rect x="199.17" y="143.15" width="20.52" height="21.05" fill="rgb(163,163,163)"/><rect x="219.08" y="143.15" width="20.52" height="21.05" fill="rgb(32,32,32)"/><rect x="239.00" y="143.15" width="20.52" height="21.05" fill="rgb(32,32,32)"/><rect x="258.92" y="143.15" width="20.52" height="21.05" fill="rgb(58,58,58)"/><rect x="278.83" y="143.15" width="20.52" height="21.05" fill="rgb(64,64,64)"/><rect x="298.75" y="143.15" width="20.52" height="21.05" fill="rgb(69,69,69)"/><rect x="318.67" y="143.15" width="20.52" height="21.05" fill="rgb(75,75,75)"/><rect x="338.58" y="143.15" width="20.52" height="21.05" fill="rgb(75,75,75)"/><rect x="358.50" y="143.15" width="20.52" height="21.05" fill="rgb(159,159,159)"/><rect x="378.42" y="143.15" width="20.52" height="21.05" fill="rgb(181,181,181)"/><rect x="398.33" y="143.15" width="20.52" height="21.05" fill="rgb(159,159,159)"/><rect x="418.25" y="143.15" width="20.52" height="21.05" fill="rgb(159,159,159)"/><rect x="438.17" y="143.15" width="20.52" height="21.05" fill="rgb(159,159,159)"/><rect x="458.08" y="143.15" width="20.52" height="21.05" fill="rgb(159,159,159)"/><rect x="478.00" y="143.15" width="20.52" height="21.05" fill="rgb(159,159,159)"/><rect x="497.92" y="143.15" width="20.52" height="21.05" fill="rgb(159,159,159)"/><rect x="517.83" y="143.15" width="20.52" height="21.05" fill="rgb(159,159,159)"/><rect x="-59.75" y="163.60" width="20.52" height="21.05" fill="rgb(119,119,119)"/><rect x="-39.83" y="163.60" width="20.52" height="21.05" fill="rgb(119,119,119)"/><rect x="-19.92" y="163.60" width="20.52" height="21.05" fill="rgb(119,119,119)"/><rect x="0.00" y="163.60" width="20.52" height="21.05" fill="rgb(119,119,119)"/><rect x="19.92" y="163.60" width="20.52" height="21.05" fill="rgb(196,196,196)"/><rect x="39.83" y="163.60" width="20.52" height="21.05" fill="rgb(229,229,229)"/><rect x="59.75" y="163.60" width="20.52" height="21.05" fill="rgb(229,229,229)"/><rect x="79.67" y="163.60" width="20.52" height="21.05" fill="rgb(229,229,229)"/><rect x="99.58" y="163.60" width="20.52" height="21.05" fill="rgb(218,218,218)"/><rect x="119.50" y="163.60" width="20.52" height="21.05" fill="rgb(196,196,196)"/><rect x="139.42" y="163.60" width="20.52" height="21.05" fill="rgb(163,163,163)"/><rect x="159.33" y="163.60" width="20.52" height="21.05" fill="rgb(141,141,141)"/><rect x="179.25" y="163.60" width="20.52" height="21.05" fill="rgb(174,174,174)"/><rect x="199.17" y="163.60" width="20.52" height="21.05" fill="rgb(163,163,163)"/><rect x="219.08" y="163.60" width="20.52" height="21.05" fill="rgb(86,86,86)"/><rect x="239.00" y="163.60" width="20.52" height="21.05" fill="rgb(97,97,97)"/><rect x="258.92" y="163.60" width="20.52" height="21.05" fill="rgb(86,86,86)"/><rect x="278.83" y="163.60" width="20.52" height="21.05" fill="rgb(86,86,86)"/><rect x="298.75" y="163.60" width="20.52" height="21.05" fill="rgb(75,75,75)"/><rect x="318.67" y="163.60" width="20.52" height="21.05" fill="rgb(97,97,97)"/><rect x="338.58" y="163.60" width="20.52" height="21.05" fill="rgb(154,154,154)"/><rect x="358.50" y="163.60" width="20.52" height="21.05" fill="rgb(159,159,159)"/><rect x="378.42" y="163.60" width="20.52" height="21.05" fill="rgb(159,159,159)"/><rect x="398.33" y="163.60" width="20.52" height="21.05" fill="rgb(170,170,170)"/><rect x="418.25" y="163.60" width="20.52" height="21.05" fill="rgb(159,159,159)"/><rect x="438.17" y="163.60" width="20.52" height="21.05" fill="rgb(181,181,181)"/><rect x="458.08" y="163.60" width="20.52" height="21.05" fill="rgb(159,159,159)"/><rect x="478.00" y="163.60" width="20.52" height="21.05" fill="rgb(159,159,159)"/><rect x="497.92" y="163.60" width="20.52" height="21.05" fill="rgb(159,159,159)"/><rect x="517.83" y="163.60" width="20.52" height="21.05" fill="rgb(159,159,159)"/><rect x="-59.75" y="184.05" width="20.52" height="21.05" fill="rgb(174,174,174)"/><rect x="-39.83" y="184.05" width="20.52" height="21.05" fill="rgb(174,174,174)"/><rect x="-19.92" y="184.05" width="20.52" height="21.05" fill="rgb(174,174,174)"/><rect x="0.00" y="184.05" width="20.52" height="21.05" fill="rgb(174,174,174)"/><rect x="19.92" y="184.05" width="20.52" height="21.05" fill="rgb(229,229,229)"/><rect x="39.83" y="184.05" width="20.52" height="21.05" fill="rgb(250,250,250)"/><rect x="59.75" y="184.05" width="20.52" height="21.05" fill="rgb(250,250,250)"/><rect x="79.67" y="184.05" width="20.52" height="21.05" fill="rgb(250,250,250)"/><rect x="99.58" y="184.05" width="20.52" height="21.05" fill="rgb(240,240,240)"/><rect x="119.50" y="184.05" width="20.52" height="21.05" fill="rgb(207,207,207)"/><rect x="139.42" y="184.05" width="20.52" height="21.05" fill="rgb(141,141,141)"/><rect x="159.33" y="184.05" width="20.52" height="21.05" fill="rgb(130,130,130)"/><rect x="179.25" y="184.05" width="20.52" height="21.05" fill="rgb(163,163,163)"/><rect x="199.17" y="184.05" width="20.52" height="21.05" fill="rgb(152,152,152)"/><rect x="219.08" y="184.05" width="20.52" height="21.05" fill="rgb(119,119,119)"/><rect x="239.00" y="184.05" width="20.52" height="21.05" fill="rgb(141,141,141)"/><rect x="258.92" y="184.05" width="20.52" height="21.05" fill="rgb(152,152,152)"/><rect x="278.83" y="184.05" width="20.52" height="21.05" fill="rgb(132,132,132)"/><rect x="298.75" y="184.05" width="20.52" height="21.05" fill="rgb(121,121,121)"/><rect x="318.67" y="184.05" width="20.52" height="21.05" fill="rgb(110,110,110)"/><rect x="338.58" y="184.05" width="20.52" height="21.05" fill="rgb(121,121,121)"/><rect x="358.50" y="184.05" width="20.52" height="21.05" fill="rgb(148,148,148)"/><rect x="378.42" y="184.05" width="20.52" height="21.05" fill="rgb(159,159,159)"/><rect x="398.33" y="184.05" width="20.52" height="21.05" fill="rgb(159,159,159)"/><rect x="418.25" y="184.05" width="20.52" height="21.05" fill="rgb(181,181,181)"/><rect x="438.17" y="184.05" width="20.52" height="21.05" fill="rgb(170,170,170)"/><rect x="458.08" y="184.05" width="20.52" height="21.05" fill="rgb(159,159,159)"/><rect x="478.00" y="184.05" width="20.52" height="21.05" fill="rgb(159,159,159)"/><rect x="497.92" y="184.05" width="20.52" height="21.05" fill="rgb(159,159,159)"/><rect x="517.83" y="184.05" width="20.52" height="21.05" fill="rgb(159,159,159)"/><rect x="-59.75" y="204.50" width="20.52" height="21.05" fill="rgb(163,163,163)"/><rect x="-39.83" y="204.50" width="20.52" height="21.05" fill="rgb(163,163,163)"/><rect x="-19.92" y="204.50" width="20.52" height="21.05" fill="rgb(163,163,163)"/><rect x="0.00" y="204.50" width="20.52" height="21.05" fill="rgb(163,163,163)"/><rect x="19.92" y="204.50" width="20.52" height="21.05" fill="rgb(207,207,207)"/><rect x="39.83" y="204.50" width="20.52" height="21.05" fill="rgb(245,245,245)"/><rect x="59.75" y="204.50" width="20.52" height="21.05" fill="rgb(250,250,250)"/><rect x="79.67" y="204.50" width="20.52" height="21.05" fill="rgb(229,229,229)"/><rect x="99.58" y="204.50" width="20.52" height="21.05" fill="rgb(207,207,207)"/><rect x="119.50" y="204.50" width="20.52" height="21.05" fill="rgb(196,196,196)"/><rect x="139.42" y="204.50" width="20.52" height="21.05" fill="rgb(144,144,144)"/><rect x="159.33" y="204.50" width="20.52" height="21.05" fill="rgb(111,111,111)"/><rect x="179.25" y="204.50" width="20.52" height="21.05" fill="rgb(89,89,89)"/><rect x="199.17" y="204.50" width="20.52" height="21.05" fill="rgb(56,56,56)"/><rect x="219.08" y="204.50" width="20.52" height="21.05" fill="rgb(67,67,67)"/><rect x="239.00" y="204.50" width="20.52" height="21.05" fill="rgb(100,100,100)"/><rect x="258.92" y="204.50" width="20.52" height="21.05" fill="rgb(111,111,111)"/><rect x="278.83" y="204.50" width="20.52" height="21.05" fill="rgb(97,97,97)"/><rect x="298.75" y="204.50" width="20.52" height="21.05" fill="rgb(78,78,78)"/><rect x="318.67" y="204.50" width="20.52" height="21.05" fill="rgb(56,56,56)"/><rect x="338.58" y="204.50" width="20.52" height="21.05" fill="rgb(67,67,67)"/><rect x="358.50" y="204.50" width="20.52" height="21.05" fill="rgb(111,111,111)"/><rect x="378.42" y="204.50" width="20.52" height="21.05" fill="rgb(122,122,122)"/><rect x="398.33" y="204.50" width="20.52" height="21.05" fill="rgb(100,100,100)"/><rect x="418.25" y="204.50" width="20.52" height="21.05" fill="rgb(100,100,100)"/><rect x="438.17" y="204.50" width="20.52" height="21.05" fill="rgb(122,122,122)"/><rect x="458.08" y="204.50" width="20.52" height="21.05" fill="rgb(100,100,100)"/><rect x="478.00" y="204.50" width="20.52" height="21.05" fill="rgb(100,100,100)"/><rect x="497.92" y="204.50" width="20.52" height="21.05" fill="rgb(100,100,100)"/><rect x="517.83" y="204.50" width="20.52" height="21.05" fill="rgb(100,100,100)"/><rect x="-59.75" y="224.95" width="20.52" height="21.05" fill="rgb(152,152,152)"/><rect x="-39.83" y="224.95" width="20.52" height="21.05" fill="rgb(152,152,152)"/><rect x="-19.92" y="224.95" width="20.52" height="21.05" fill="rgb(152,152,152)"/><rect x="0.00" y="224.95" width="20.52" height="21.05" fill="rgb(152,152,152)"/><rect x="19.92" y="224.95" width="20.52" height="21.05" fill="rgb(207,207,207)"/><rect x="39.83" y="224.95" width="20.52" height="21.05" fill="rgb(218,218,218)"/><rect x="59.75" y="224.95" width="20.52" height="21.05" fill="rgb(223,223,223)"/><rect x="79.67" y="224.95" width="20.52" height="21.05" fill="rgb(212,212,212)"/><rect x="99.58" y="224.95" width="20.52" height="21.05" fill="rgb(196,196,196)"/><rect x="119.50" y="224.95" width="20.52" height="21.05" fill="rgb(185,185,185)"/><rect x="139.42" y="224.95" width="20.52" height="21.05" fill="rgb(56,56,56)"/><rect x="159.33" y="224.95" width="20.52" height="21.05" fill="rgb(34,34,34)"/><rect x="179.25" y="224.95" width="20.52" height="21.05" fill="rgb(32,32,32)"/><rect x="199.17" y="224.95" width="20.52" height="21.05" fill="rgb(34,34,34)"/><rect x="219.08" y="224.95" width="20.52" height="21.05" fill="rgb(45,45,45)"/><rect x="239.00" y="224.95" width="20.52" height="21.05" fill="rgb(56,56,56)"/><rect x="258.92" y="224.95" width="20.52" height="21.05" fill="rgb(89,89,89)"/><rect x="278.83" y="224.95" width="20.52" height="21.05" fill="rgb(97,97,97)"/><rect x="298.75" y="224.95" width="20.52" height="21.05" fill="rgb(78,78,78)"/><rect x="318.67" y="224.95" width="20.52" height="21.05" fill="rgb(45,45,45)"/><rect x="338.58" y="224.95" width="20.52" height="21.05" fill="rgb(56,56,56)"/><rect x="358.50" y="224.95" width="20.52" height="21.05" fill="rgb(45,45,45)"/><rect x="378.42" y="224.95" width="20.52" height="21.05" fill="rgb(67,67,67)"/><rect x="398.33" y="224.95" width="20.52" height="21.05" fill="rgb(122,122,122)"/><rect x="418.25" y="224.95" width="20.52" height="21.05" fill="rgb(89,89,89)"/><rect x="438.17" y="224.95" width="20.52" height="21.05" fill="rgb(100,100,100)"/><rect x="458.08" y="224.95" width="20.52" height="21.05" fill="rgb(111,111,111)"/><rect x="478.00" y="224.95" width="20.52" height="21.05" fill="rgb(111,111,111)"/><rect x="497.92" y="224.95" width="20.52" height="21.05" fill="rgb(111,111,111)"/><rect x="517.83" y="224.95" width="20.52" height="21.05" fill="rgb(111,111,111)"/><rect x="-59.75" y="245.40" width="20.52" height="21.05" fill="rgb(152,152,152)"/><rect x="-39.83" y="245.40" width="20.52" height="21.05" fill="rgb(152,152,152)"/><rect x="-19.92" y="245.40" width="20.52" height="21.05" fill="rgb(152,152,152)"/><rect x="0.00" y="245.40" width="20.52" height="21.05" fill="rgb(152,152,152)"/><rect x="19.92" y="245.40" width="20.52" height="21.05" fill="rgb(201,201,201)"/><rect x="39.83" y="245.40" width="20.52" height="21.05" fill="rgb(207,207,207)"/><rect x="59.75" y="245.40" width="20.52" height="21.05" fill="rgb(207,207,207)"/><rect x="79.67" y="245.40" width="20.52" height="21.05" fill="rgb(201,201,201)"/><rect x="99.58" y="245.40" width="20.52" height="21.05" fill="rgb(190,190,190)"/><rect x="119.50" y="245.40" width="20.52" height="21.05" fill="rgb(168,168,168)"/><rect x="139.42" y="245.40" width="20.52" height="21.05" fill="rgb(32,32,32)"/><rect x="159.33" y="245.40" width="20.52" height="21.05" fill="rgb(32,32,32)"/><rect x="179.25" y="245.40" width="20.52" height="21.05" fill="rgb(32,32,32)"/><rect x="199.17" y="245.40" width="20.52" height="21.05" fill="rgb(32,32,32)"/><rect x="219.08" y="245.40" width="20.52" height="21.05" fill="rgb(34,34,34)"/><rect x="239.00" y="245.40" width="20.52" height="21.05" fill="rgb(34,34,34)"/><rect x="258.92" y="245.40" width="20.52" height="21.05" fill="rgb(78,78,78)"/><rect x="278.83" y="245.40" width="20.52" height="21.05" fill="rgb(97,97,97)"/><rect x="298.75" y="245.40" width="20.52" height="21.05" fill="rgb(67,67,67)"/><rect x="318.67" y="245.40" width="20.52" height="21.05" fill="rgb(34,34,34)"/><rect x="338.58" y="245.40" width="20.52" height="21.05" fill="rgb(34,34,34)"/><rect x="358.50" y="245.40" width="20.52" height="21.05" fill="rgb(45,45,45)"/><rect x="378.42" y="245.40" width="20.52" height="21.05" fill="rgb(67,67,67)"/><rect x="398.33" y="245.40" width="20.52" height="21.05" fill="rgb(89,89,89)"/><rect x="418.25" y="245.40" width="20.52" height="21.05" fill="rgb(100,100,100)"/><rect x="438.17" y="245.40" width="20.52" height="21.05" fill="rgb(111,111,111)"/><rect x="458.08" y="245.40" width="20.52" height="21.05" fill="rgb(111,111,111)"/><rect x="478.00" y="245.40" width="20.52" height="21.05" fill="rgb(111,111,111)"/><rect x="497.92" y="245.40" width="20.52" height="21.05" fill="rgb(111,111,111)"/><rect x="517.83" y="245.40" width="20.52" height="21.05" fill="rgb(111,111,111)"/><rect x="-59.75" y="265.85" width="20.52" height="21.05" fill="rgb(174,174,174)"/><rect x="-39.83" y="265.85" width="20.52" height="21.05" fill="rgb(174,174,174)"/><rect x="-19.92" y="265.85" width="20.52" height="21.05" fill="rgb(174,174,174)"/><rect x="0.00" y="265.85" width="20.52" height="21.05" fill="rgb(174,174,174)"/><rect x="19.92" y="265.85" width="20.52" height="21.05" fill="rgb(185,185,185)"/><rect x="39.83" y="265.85" width="20.52" height="21.05" fill="rgb(185,185,185)"/><rect x="59.75" y="265.85" width="20.52" height="21.05" fill="rgb(179,179,179)"/><rect x="79.67" y="265.85" width="20.52" height="21.05" fill="rgb(168,168,168)"/><rect x="99.58" y="265.85" width="20.52" height="21.05" fill="rgb(157,157,157)"/><rect x="119.50" y="265.85" width="20.52" height="21.05" fill="rgb(141,141,141)"/><rect x="139.42" y="265.85" width="20.52" height="21.05" fill="rgb(34,34,34)"/><rect x="159.33" y="265.85" width="20.52" height="21.05" fill="rgb(32,32,32)"/><rect x="179.25" y="265.85" width="20.52" height="21.05" fill="rgb(32,32,32)"/><rect x="199.17" y="265.85" width="20.52" height="21.05" fill="rgb(34,34,34)"/><rect x="219.08" y="265.85" width="20.52" height="21.05" fill="rgb(45,45,45)"/><rect x="239.00" y="265.85" width="20.52" height="21.05" fill="rgb(45,45,45)"/><rect x="258.92" y="265.85" width="20.52" height="21.05" fill="rgb(67,67,67)"/><rect x="278.83" y="265.85" width="20.52" height="21.05" fill="rgb(97,97,97)"/><rect x="298.75" y="265.85" width="20.52" height="21.05" fill="rgb(56,56,56)"/><rect x="318.67" y="265.85" width="20.52" height="21.05" fill="rgb(45,45,45)"/><rect x="338.58" y="265.85" width="20.52" height="21.05" fill="rgb(56,56,56)"/><rect x="358.50" y="265.85" width="20.52" height="21.05" fill="rgb(67,67,67)"/><rect x="378.42" y="265.85" width="20.52" height="21.05" fill="rgb(78,78,78)"/><rect x="398.33" y="265.85" width="20.52" height="21.05" fill="rgb(78,78,78)"/><rect x="418.25" y="265.85" width="20.52" height="21.05" fill="rgb(89,89,89)"/><rect x="438.17" y="265.85" width="20.52" height="21.05" fill="rgb(89,89,89)"/><rect x="458.08" y="265.85" width="20.52" height="21.05" fill="rgb(78,78,78)"/><rect x="478.00" y="265.85" width="20.52" height="21.05" fill="rgb(78,78,78)"/><rect x="497.92" y="265.85" width="20.52" height="21.05" fill="rgb(78,78,78)"/><rect x="517.83" y="265.85" width="20.52" height="21.05" fill="rgb(78,78,78)"/><rect x="-59.75" y="286.30" width="20.52" height="21.05" fill="rgb(119,119,119)"/><rect x="-39.83" y="286.30" width="20.52" height="21.05" fill="rgb(119,119,119)"/><rect x="-19.92" y="286.30" width="20.52" height="21.05" fill="rgb(119,119,119)"/><rect x="0.00" y="286.30" width="20.52" height="21.05" fill="rgb(119,119,119)"/><rect x="19.92" y="286.30" width="20.52" height="21.05" fill="rgb(113,113,113)"/><rect x="39.83" y="286.30" width="20.52" height="21.05" fill="rgb(108,108,108)"/><rect x="59.75" y="286.30" width="20.52" height="21.05" fill="rgb(108,108,108)"/><rect x="79.67" y="286.30" width="20.52" height="21.05" fill="rgb(102,102,102)"/><rect x="99.58" y="286.30" width="20.52" height="21.05" fill="rgb(97,97,97)"/><rect x="119.50" y="286.30" width="20.52" height="21.05" fill="rgb(97,97,97)"/><rect x="139.42" y="286.30" width="20.52" height="21.05" fill="rgb(86,86,86)"/><rect x="159.33" y="286.30" width="20.52" height="21.05" fill="rgb(80,80,80)"/><rect x="179.25" y="286.30" width="20.52" height="21.05" fill="rgb(80,80,80)"/><rect x="199.17" y="286.30" width="20.52" height="21.05" fill="rgb(78,78,78)"/><rect x="219.08" y="286.30" width="20.52" height="21.05" fill="rgb(67,67,67)"/><rect x="239.00" y="286.30" width="20.52" height="21.05" fill="rgb(56,56,56)"/><rect x="258.92" y="286.30" width="20.52" height="21.05" fill="rgb(45,45,45)"/><rect x="278.83" y="286.30" width="20.52" height="21.05" fill="rgb(56,56,56)"/><rect x="298.75" y="286.30" width="20.52" height="21.05" fill="rgb(45,45,45)"/><rect x="318.67" y="286.30" width="20.52" height="21.05" fill="rgb(45,45,45)"/><rect x="338.58" y="286.30" width="20.52" height="21.05" fill="rgb(56,56,56)"/><rect x="358.50" y="286.30" width="20.52" height="21.05" fill="rgb(67,67,67)"/><rect x="378.42" y="286.30" width="20.52" height="21.05" fill="rgb(89,89,89)"/><rect x="398.33" y="286.30" width="20.52" height="21.05" fill="rgb(67,67,67)"/><rect x="418.25" y="286.30" width="20.52" height="21.05" fill="rgb(45,45,45)"/><rect x="438.17" y="286.30" width="20.52" height="21.05" fill="rgb(45,45,45)"/><rect x="458.08" y="286.30" width="20.52" height="21.05" fill="rgb(56,56,56)"/><rect x="478.00" y="286.30" width="20.52" height="21.05" fill="rgb(56,56,56)"/><rect x="497.92" y="286.30" width="20.52" height="21.05" fill="rgb(56,56,56)"/><rect x="517.83" y="286.30" width="20.52" height="21.05" fill="rgb(56,56,56)"/><rect x="-59.75" y="306.75" width="20.52" height="21.05" fill="rgb(163,163,163)"/><rect x="-39.83" y="306.75" width="20.52" height="21.05" fill="rgb(163,163,163)"/><rect x="-19.92" y="306.75" width="20.52" height="21.05" fill="rgb(163,163,163)"/><rect x="0.00" y="306.75" width="20.52" height="21.05" fill="rgb(163,163,163)"/><rect x="19.92" y="306.75" width="20.52" height="21.05" fill="rgb(152,152,152)"/><rect x="39.83" y="306.75" width="20.52" height="21.05" fill="rgb(141,141,141)"/><rect x="59.75" y="306.75" width="20.52" height="21.05" fill="rgb(130,130,130)"/><rect x="79.67" y="306.75" width="20.52" height="21.05" fill="rgb(119,119,119)"/><rect x="99.58" y="306.75" width="20.52" height="21.05" fill="rgb(108,108,108)"/><rect x="119.50" y="306.75" width="20.52" height="21.05" fill="rgb(97,97,97)"/><rect x="139.42" y="306.75" width="20.52" height="21.05" fill="rgb(89,89,89)"/><rect x="159.33" y="306.75" width="20.52" height="21.05" fill="rgb(78,78,78)"/><rect x="179.25" y="306.75" width="20.52" height="21.05" fill="rgb(89,89,89)"/><rect x="199.17" y="306.75" width="20.52" height="21.05" fill="rgb(89,89,89)"/><rect x="219.08" y="306.75" width="20.52" height="21.05" fill="rgb(78,78,78)"/><rect x="239.00" y="306.75" width="20.52" height="21.05" fill="rgb(56,56,56)"/><rect x="258.92" y="306.75" width="20.52" height="21.05" fill="rgb(45,45,45)"/><rect x="278.83" y="306.75" width="20.52" height="21.05" fill="rgb(45,45,45)"/><rect x="298.75" y="306.75" width="20.52" height="21.05" fill="rgb(56,56,56)"/><rect x="318.67" y="306.75" width="20.52" height="21.05" fill="rgb(45,45,45)"/><rect x="338.58" y="306.75" width="20.52" height="21.05" fill="rgb(67,67,67)"/><rect x="358.50" y="306.75" width="20.52" height="21.05" fill="rgb(89,89,89)"/><rect x="378.42" y="306.75" width="20.52" height="21.05" fill="rgb(67,67,67)"/><rect x="398.33" y="306.75" width="20.52" height="21.05" fill="rgb(56,56,56)"/><rect x="418.25" y="306.75" width="20.52" height="21.05" fill="rgb(56,56,56)"/><rect x="438.17" y="306.75" width="20.52" height="21.05" fill="rgb(78,78,78)"/><rect x="458.08" y="306.75" width="20.52" height="21.05" fill="rgb(111,111,111)"/><rect x="478.00" y="306.75" width="20.52" height="21.05" fill="rgb(111,111,111)"/><rect x="497.92" y="306.75" width="20.52" height="21.05" fill="rgb(111,111,111)"/><rect x="517.83" y="306.75" width="20.52" height="21.05" fill="rgb(111,111,111)"/><rect x="-59.75" y="327.20" width="20.52" height="21.05" fill="rgb(152,152,152)"/><rect x="-39.83" y="327.20" width="20.52" height="21.05" fill="rgb(152,152,152)"/><rect x="-19.92" y="327.20" width="20.52" height="21.05" fill="rgb(152,152,152)"/><rect x="0.00" y="327.20" width="20.52" height="21.05" fill="rgb(152,152,152)"/><rect x="19.92" y="327.20" width="20.52" height="21.05" fill="rgb(152,152,152)"/><rect x="39.83" y="327.20" width="20.52" height="21.05" fill="rgb(141,141,141)"/><rect x="59.75" y="327.20" width="20.52" height="21.05" fill="rgb(119,119,119)"/><rect x="79.67" y="327.20" width="20.52" height="21.05" fill="rgb(97,97,97)"/><rect x="99.58" y="327.20" width="20.52" height="21.05" fill="rgb(86,86,86)"/><rect x="119.50" y="327.20" width="20.52" height="21.05" fill="rgb(64,64,64)"/><rect x="139.42" y="327.20" width="20.52" height="21.05" fill="rgb(56,56,56)"/><rect x="159.33" y="327.20" width="20.52" height="21.05" fill="rgb(56,56,56)"/><rect x="179.25" y="327.20" width="20.52" height="21.05" fill="rgb(67,67,67)"/><rect x="199.17" y="327.20" width="20.52" height="21.05" fill="rgb(78,78,78)"/><rect x="219.08" y="327.20" width="20.52" height="21.05" fill="rgb(78,78,78)"/><rect x="239.00" y="327.20" width="20.52" height="21.05" fill="rgb(56,56,56)"/><rect x="258.92" y="327.20" width="20.52" height="21.05" fill="rgb(56,56,56)"/><rect x="278.83" y="327.20" width="20.52" height="21.05" fill="rgb(67,67,67)"/><rect x="298.75" y="327.20" width="20.52" height="21.05" fill="rgb(56,56,56)"/><rect x="318.67" y="327.20" width="20.52" height="21.05" fill="rgb(45,45,45)"/><rect x="338.58" y="327.20" width="20.52" height="21.05" fill="rgb(34,34,34)"/><rect x="358.50" y="327.20" width="20.52" height="21.05" fill="rgb(34,34,34)"/><rect x="378.42" y="327.20" width="20.52" height="21.05" fill="rgb(45,45,45)"/><rect x="398.33" y="327.20" width="20.52" height="21.05" fill="rgb(45,45,45)"/><rect x="418.25" y="327.20" width="20.52" height="21.05" fill="rgb(67,67,67)"/><rect x="438.17" y="327.20" width="20.52" height="21.05" fill="rgb(100,100,100)"/><rect x="458.08" y="327.20" width="20.52" height="21.05" fill="rgb(133,133,133)"/><rect x="478.00" y="327.20" width="20.52" height="21.05" fill="rgb(133,133,133)"/><rect x="497.92" y="327.20" width="20.52" height="21.05" fill="rgb(133,133,133)"/><rect x="517.83" y="327.20" width="20.52" height="21.05" fill="rgb(133,133,133)"/><rect x="-59.75" y="347.65" width="20.52" height="21.05" fill="rgb(152,152,152)"/><rect x="-39.83" y="347.65" width="20.52" height="21.05" fill="rgb(152,152,152)"/><rect x="-19.92" y="347.65" width="20.52" height="21.05" fill="rgb(152,152,152)"/><rect x="0.00" y="347.65" width="20.52" height="21.05" fill="rgb(152,152,152)"/><rect x="19.92" y="347.65" width="20.52" height="21.05" fill="rgb(141,141,141)"/><rect x="39.83" y="347.65" width="20.52" height="21.05" fill="rgb(119,119,119)"/><rect x="59.75" y="347.65" width="20.52" height="21.05" fill="rgb(97,97,97)"/><rect x="79.67" y="347.65" width="20.52" height="21.05" fill="rgb(86,86,86)"/><rect x="99.58" y="347.65" width="20.52" height="21.05" fill="rgb(75,75,75)"/><rect x="119.50" y="347.65" width="20.52" height="21.05" fill="rgb(53,53,53)"/><rect x="139.42" y="347.65" width="20.52" height="21.05" fill="rgb(34,34,34)"/><rect x="159.33" y="347.65" width="20.52" height="21.05" fill="rgb(34,34,34)"/><rect x="179.25" y="347.65" width="20.52" height="21.05" fill="rgb(34,34,34)"/><rect x="199.17" y="347.65" width="20.52" height="21.05" fill="rgb(45,45,45)"/><rect x="219.08" y="347.65" width="20.52" height="21.05" fill="rgb(45,45,45)"/><rect x="239.00" y="347.65" width="20.52" height="21.05" fill="rgb(56,56,56)"/><rect x="258.92" y="347.65" width="20.52" height="21.05" fill="rgb(67,67,67)"/><rect x="278.83" y="347.65" width="20.52" height="21.05" fill="rgb(67,67,67)"/><rect x="298.75" y="347.65" width="20.52" height="21.05" fill="rgb(56,56,56)"/><rect x="318.67" y="347.65" width="20.52" height="21.05" fill="rgb(67,67,67)"/><rect x="338.58" y="347.65" width="20.52" height="21.05" fill="rgb(78,78,78)"/><rect x="358.50" y="347.65" width="20.52" height="21.05" fill="rgb(89,89,89)"/><rect x="378.42" y="347.65" width="20.52" height="21.05" fill="rgb(89,89,89)"/><rect x="398.33" y="347.65" width="20.52" height="21.05" fill="rgb(100,100,100)"/><rect x="418.25" y="347.65" width="20.52" height="21.05" fill="rgb(89,89,89)"/><rect x="438.17" y="347.65" width="20.52" height="21.05" fill="rgb(89,89,89)"/><rect x="458.08" y="347.65" width="20.52" height="21.05" fill="rgb(100,100,100)"/><rect x="478.00" y="347.65" width="20.52" height="21.05" fill="rgb(100,100,100)"/><rect x="497.92" y="347.65" width="20.52" height="21.05" fill="rgb(100,100,100)"/><rect x="517.83" y="347.65" width="20.52" height="21.05" fill="rgb(100,100,100)"/><rect x="-59.75" y="368.10" width="20.52" height="21.05" fill="rgb(119,119,119)"/><rect x="-39.83" y="368.10" width="20.52" height="21.05" fill="rgb(119,119,119)"/><rect x="-19.92" y="368.10" width="20.52" height="21.05" fill="rgb(119,119,119)"/><rect x="0.00" y="368.10" width="20.52" height="21.05" fill="rgb(119,119,119)"/><rect x="19.92" y="368.10" width="20.52" height="21.05" fill="rgb(108,108,108)"/><rect x="39.83" y="368.10" width="20.52" height="21.05" fill="rgb(97,97,97)"/><rect x="59.75" y="368.10" width="20.52" height="21.05" fill="rgb(86,86,86)"/><rect x="79.67" y="368.10" width="20.52" height="21.05" fill="rgb(64,64,64)"/><rect x="99.58" y="368.10" width="20.52" height="21.05" fill="rgb(53,53,53)"/><rect x="119.50" y="368.10" width="20.52" height="21.05" fill="rgb(42,42,42)"/><rect x="139.42" y="368.10" width="20.52" height="21.05" fill="rgb(32,32,32)"/><rect x="159.33" y="368.10" width="20.52" height="21.05" fill="rgb(32,32,32)"/><rect x="179.25" y="368.10" width="20.52" height="21.05" fill="rgb(32,32,32)"/><rect x="199.17" y="368.10" width="20.52" height="21.05" fill="rgb(34,34,34)"/><rect x="219.08" y="368.10" width="20.52" height="21.05" fill="rgb(45,45,45)"/><rect x="239.00" y="368.10" width="20.52" height="21.05" fill="rgb(45,45,45)"/><rect x="258.92" y="368.10" width="20.52" height="21.05" fill="rgb(45,45,45)"/><rect x="278.83" y="368.10" width="20.52" height="21.05" fill="rgb(56,56,56)"/><rect x="298.75" y="368.10" width="20.52" height="21.05" fill="rgb(56,56,56)"/><rect x="318.67" y="368.10" width="20.52" height="21.05" fill="rgb(56,56,56)"/><rect x="338.58" y="368.10" width="20.52" height="21.05" fill="rgb(67,67,67)"/><rect x="358.50" y="368.10" width="20.52" height="21.05" fill="rgb(67,67,67)"/><rect x="378.42" y="368.10" width="20.52" height="21.05" fill="rgb(78,78,78)"/><rect x="398.33" y="368.10" width="20.52" height="21.05" fill="rgb(78,78,78)"/><rect x="418.25" y="368.10" width="20.52" height="21.05" fill="rgb(67,67,67)"/><rect x="438.17" y="368.10" width="20.52" height="21.05" fill="rgb(67,67,67)"/><rect x="458.08" y="368.10" width="20.52" height="21.05" fill="rgb(78,78,78)"/><rect x="478.00" y="368.10" width="20.52" height="21.05" fill="rgb(78,78,78)"/><rect x="497.92" y="368.10" width="20.52" height="21.05" fill="rgb(78,78,78)"/><rect x="517.83" y="368.10" width="20.52" height="21.05" fill="rgb(78,78,78)"/><rect x="-59.75" y="388.55" width="20.52" height="21.05" fill="rgb(119,119,119)"/><rect x="-39.83" y="388.55" width="20.52" height="21.05" fill="rgb(119,119,119)"/><rect x="-19.92" y="388.55" width="20.52" height="21.05" fill="rgb(119,119,119)"/><rect x="0.00" y="388.55" width="20.52" height="21.05" fill="rgb(119,119,119)"/><rect x="19.92" y="388.55" width="20.52" height="21.05" fill="rgb(108,108,108)"/><rect x="39.83" y="388.55" width="20.52" height="21.05" fill="rgb(86,86,86)"/><rect x="59.75" y="388.55" width="20.52" height="21.05" fill="rgb(64,64,64)"/><rect x="79.67" y="388.55" width="20.52" height="21.05" fill="rgb(53,53,53)"/><rect x="99.58" y="388.55" width="20.52" height="21.05" fill="rgb(42,42,42)"/><rect x="119.50" y="388.55" width="20.52" height="21.05" fill="rgb(36,36,36)"/><rect x="139.42" y="388.55" width="20.52" height="21.05" fill="rgb(32,32,32)"/><rect x="159.33" y="388.55" width="20.52" height="21.05" fill="rgb(32,32,32)"/><rect x="179.25" y="388.55" width="20.52" height="21.05" fill="rgb(32,32,32)"/><rect x="199.17" y="388.55" width="20.52" height="21.05" fill="rgb(32,32,32)"/><rect x="219.08" y="388.55" width="20.52" height="21.05" fill="rgb(34,34,34)"/><rect x="239.00" y="388.55" width="20.52" height="21.05" fill="rgb(34,34,34)"/><rect x="258.92" y="388.55" width="20.52" height="21.05" fill="rgb(45,45,45)"/><rect x="278.83" y="388.55" width="20.52" height="21.05" fill="rgb(45,45,45)"/><rect x="298.75" y="388.55" width="20.52" height="21.05" fill="rgb(45,45,45)"/><rect x="318.67" y="388.55" width="20.52" height="21.05" fill="rgb(45,45,45)"/><rect x="338.58" y="388.55" width="20.52" height="21.05" fill="rgb(56,56,56)"/><rect x="358.50" y="388.55" width="20.52" height="21.05" fill="rgb(56,56,56)"/><rect x="378.42" y="388.55" width="20.52" height="21.05" fill="rgb(56,56,56)"/><rect x="398.33" y="388.55" width="20.52" height="21.05" fill="rgb(56,56,56)"/><rect x="418.25" y="388.55" width="20.52" height="21.05" fill="rgb(45,45,45)"/><rect x="438.17" y="388.55" width="20.52" height="21.05" fill="rgb(45,45,45)"/><rect x="458.08" y="388.55" width="20.52" height="21.05" fill="rgb(45,45,45)"/><rect x="478.00" y="388.55" width="20.52" height="21.05" fill="rgb(45,45,45)"/><rect x="497.92" y="388.55" width="20.52" height="21.05" fill="rgb(45,45,45)"/><rect x="517.83" y="388.55" width="20.52" height="21.05" fill="rgb(45,45,45)"/><rect x="-59.75" y="409.00" width="20.52" height="21.05" fill="rgb(119,119,119)"/><rect x="-39.83" y="409.00" width="20.52" height="21.05" fill="rgb(119,119,119)"/><rect x="-19.92" y="409.00" width="20.52" height="21.05" fill="rgb(119,119,119)"/><rect x="0.00" y="409.00" width="20.52" height="21.05" fill="rgb(119,119,119)"/><rect x="19.92" y="409.00" width="20.52" height="21.05" fill="rgb(108,108,108)"/><rect x="39.83" y="409.00" width="20.52" height="21.05" fill="rgb(86,86,86)"/><rect x="59.75" y="409.00" width="20.52" height="21.05" fill="rgb(64,64,64)"/><rect x="79.67" y="409.00" width="20.52" height="21.05" fill="rgb(53,53,53)"/><rect x="99.58" y="409.00" width="20.52" height="21.05" fill="rgb(42,42,42)"/><rect x="119.50" y="409.00" width="20.52" height="21.05" fill="rgb(36,36,36)"/><rect x="139.42" y="409.00" width="20.52" height="21.05" fill="rgb(32,32,32)"/><rect x="159.33" y="409.00" width="20.52" height="21.05" fill="rgb(32,32,32)"/><rect x="179.25" y="409.00" width="20.52" height="21.05" fill="rgb(32,32,32)"/><rect x="199.17" y="409.00" width="20.52" height="21.05" fill="rgb(32,32,32)"/><rect x="219.08" y="409.00" width="20.52" height="21.05" fill="rgb(34,34,34)"/><rect x="239.00" y="409.00" width="20.52" height="21.05" fill="rgb(34,34,34)"/><rect x="258.92" y="409.00" width="20.52" height="21.05" fill="rgb(45,45,45)"/><rect x="278.83" y="409.00" width="20.52" height="21.05" fill="rgb(45,45,45)"/><rect x="298.75" y="409.00" width="20.52" height="21.05" fill="rgb(45,45,45)"/><rect x="318.67" y="409.00" width="20.52" height="21.05" fill="rgb(45,45,45)"/><rect x="338.58" y="409.00" width="20.52" height="21.05" fill="rgb(56,56,56)"/><rect x="358.50" y="409.00" width="20.52" height="21.05" fill="rgb(56,56,56)"/><rect x="378.42" y="409.00" width="20.52" height="21.05" fill="rgb(56,56,56)"/><rect x="398.33" y="409.00" width="20.52" height="21.05" fill="rgb(56,56,56)"/><rect x="418.25" y="409.00" width="20.52" height="21.05" fill="rgb(45,45,45)"/><rect x="438.17" y="409.00" width="20.52" height="21.05" fill="rgb(45,45,45)"/><rect x="458.08" y="409.00" width="20.52" height="21.05" fill="rgb(45,45,45)"/><rect x="478.00" y="409.00" width="20.52" height="21.05" fill="rgb(45,45,45)"/><rect x="497.92" y="409.00" width="20.52" height="21.05" fill="rgb(45,45,45)"/><rect x="517.83" y="409.00" width="20.52" height="21.05" fill="rgb(45,45,45)"/><rect x="-59.75" y="429.45" width="20.52" height="21.05" fill="rgb(119,119,119)"/><rect x="-39.83" y="429.45" width="20.52" height="21.05" fill="rgb(119,119,119)"/><rect x="-19.92" y="429.45" width="20.52" height="21.05" fill="rgb(119,119,119)"/><rect x="0.00" y="429.45" width="20.52" height="21.05" fill="rgb(119,119,119)"/><rect x="19.92" y="429.45" width="20.52" height="21.05" fill="rgb(108,108,108)"/><rect x="39.83" y="429.45" width="20.52" height="21.05" fill="rgb(86,86,86)"/><rect x="59.75" y="429.45" width="20.52" height="21.05" fill="rgb(64,64,64)"/><rect x="79.67" y="429.45" width="20.52" height="21.05" fill="rgb(53,53,53)"/><rect x="99.58" y="429.45" width="20.52" height="21.05" fill="rgb(42,42,42)"/><rect x="119.50" y="429.45" width="20.52" height="21.05" fill="rgb(36,36,36)"/><rect x="139.42" y="429.45" width="20.52" height="21.05" fill="rgb(32,32,32)"/><rect x="159.33" y="429.45" width="20.52" height="21.05" fill="rgb(32,32,32)"/><rect x="179.25" y="429.45" width="20.52" height="21.05" fill="rgb(32,32,32)"/><rect x="199.17" y="429.45" width="20.52" height="21.05" fill="rgb(32,32,32)"/><rect x="219.08" y="429.45" width="20.52" height="21.05" fill="rgb(34,34,34)"/><rect x="239.00" y="429.45" width="20.52" height="21.05" fill="rgb(34,34,34)"/><rect x="258.92" y="429.45" width="20.52" height="21.05" fill="rgb(45,45,45)"/><rect x="278.83" y="429.45" width="20.52" height="21.05" fill="rgb(45,45,45)"/><rect x="298.75" y="429.45" width="20.52" height="21.05" fill="rgb(45,45,45)"/><rect x="318.67" y="429.45" width="20.52" height="21.05" fill="rgb(45,45,45)"/><rect x="338.58" y="429.45" width="20.52" height="21.05" fill="rgb(56,56,56)"/><rect x="358.50" y="429.45" width="20.52" height="21.05" fill="rgb(56,56,56)"/><rect x="378.42" y="429.45" width="20.52" height="21.05" fill="rgb(56,56,56)"/><rect x="398.33" y="429.45" width="20.52" height="21.05" fill="rgb(56,56,56)"/><rect x="418.25" y="429.45" width="20.52" height="21.05" fill="rgb(45,45,45)"/><rect x="438.17" y="429.45" width="20.52" height="21.05" fill="rgb(45,45,45)"/><rect x="458.08" y="429.45" width="20.52" height="21.05" fill="rgb(45,45,45)"/><rect x="478.00" y="429.45" width="20.52" height="21.05" fill="rgb(45,45,45)"/><rect x="497.92" y="429.45" width="20.52" height="21.05" fill="rgb(45,45,45)"/><rect x="517.83" y="429.45" width="20.52" height="21.05" fill="rgb(45,45,45)"/><rect x="-59.75" y="449.90" width="20.52" height="21.05" fill="rgb(119,119,119)"/><rect x="-39.83" y="449.90" width="20.52" height="21.05" fill="rgb(119,119,119)"/><rect x="-19.92" y="449.90" width="20.52" height="21.05" fill="rgb(119,119,119)"/><rect x="0.00" y="449.90" width="20.52" height="21.05" fill="rgb(119,119,119)"/><rect x="19.92" y="449.90" width="20.52" height="21.05" fill="rgb(108,108,108)"/><rect x="39.83" y="449.90" width="20.52" height="21.05" fill="rgb(86,86,86)"/><rect x="59.75" y="449.90" width="20.52" height="21.05" fill="rgb(64,64,64)"/><rect x="79.67" y="449.90" width="20.52" height="21.05" fill="rgb(53,53,53)"/><rect x="99.58" y="449.90" width="20.52" height="21.05" fill="rgb(42,42,42)"/><rect x="119.50" y="449.90" width="20.52" height="21.05" fill="rgb(36,36,36)"/><rect x="139.42" y="449.90" width="20.52" height="21.05" fill="rgb(32,32,32)"/><rect x="159.33" y="449.90" width="20.52" height="21.05" fill="rgb(32,32,32)"/><rect x="179.25" y="449.90" width="20.52" height="21.05" fill="rgb(32,32,32)"/><rect x="199.17" y="449.90" width="20.52" height="21.05" fill="rgb(32,32,32)"/><rect x="219.08" y="449.90" width="20.52" height="21.05" fill="rgb(34,34,34)"/><rect x="239.00" y="449.90" width="20.52" height="21.05" fill="rgb(34,34,34)"/><rect x="258.92" y="449.90" width="20.52" height="21.05" fill="rgb(45,45,45)"/><rect x="278.83" y="449.90" width="20.52" height="21.05" fill="rgb(45,45,45)"/><rect x="298.75" y="449.90" width="20.52" height="21.05" fill="rgb(45,45,45)"/><rect x="318.67" y="449.90" width="20.52" height="21.05" fill="rgb(45,45,45)"/><rect x="338.58" y="449.90" width="20.52" height="21.05" fill="rgb(56,56,56)"/><rect x="358.50" y="449.90" width="20.52" height="21.05" fill="rgb(56,56,56)"/><rect x="378.42" y="449.90" width="20.52" height="21.05" fill="rgb(56,56,56)"/><rect x="398.33" y="449.90" width="20.52" height="21.05" fill="rgb(56,56,56)"/><rect x="418.25" y="449.90" width="20.52" height="21.05" fill="rgb(45,45,45)"/><rect x="438.17" y="449.90" width="20.52" height="21.05" fill="rgb(45,45,45)"/><rect x="458.08" y="449.90" width="20.52" height="21.05" fill="rgb(45,45,45)"/><rect x="478.00" y="449.90" width="20.52" height="21.05" fill="rgb(45,45,45)"/><rect x="497.92" y="449.90" width="20.52" height="21.05" fill="rgb(45,45,45)"/><rect x="517.83" y="449.90" width="20.52" height="21.05" fill="rgb(45,45,45)"/></g>
<rect x="0" y="0" width="478" height="409" filter="url(#noise)" opacity="0.35" style="mix-blend-mode:overlay"/>
<g filter="url(#sblur)"><line x1="65" y1="12" x2="479" y2="13" stroke="rgb(215,215,215)" stroke-width="3" stroke-opacity="0.83" stroke-linecap="round"/><ellipse cx="38.5" cy="9.0" rx="38.5" ry="2.40" transform="rotate(1.57 38.5 9.0)" fill="rgb(190,190,190)" fill-opacity="0.6"/><ellipse cx="278.0" cy="29.5" rx="29.8" ry="2.15" transform="rotate(13.54 278.0 29.5)" fill="rgb(220,220,220)" fill-opacity="0.83"/><ellipse cx="404.0" cy="34.5" rx="18.6" ry="2.15" transform="rotate(-15.71 404.0 34.5)" fill="rgb(220,220,220)" fill-opacity="0.83"/><ellipse cx="456.5" cy="28.5" rx="25.7" ry="2.15" transform="rotate(-18.43 456.5 28.5)" fill="rgb(215,215,215)" fill-opacity="0.75"/><ellipse cx="359.5" cy="80.5" rx="20.3" ry="1.90" transform="rotate(-17.45 359.5 80.5)" fill="rgb(210,210,210)" fill-opacity="0.6"/><ellipse cx="381.0" cy="143.0" rx="36.8" ry="2.40" transform="rotate(-18.43 381.0 143.0)" fill="rgb(210,210,210)" fill-opacity="0.83"/><ellipse cx="446.5" cy="112.5" rx="39.9" ry="3.90" transform="rotate(-30.96 446.5 112.5)" fill="rgb(205,205,205)" fill-opacity="0.75"/><ellipse cx="417.0" cy="177.5" rx="64.6" ry="2.40" transform="rotate(-7.81 417.0 177.5)" fill="rgb(200,200,200)" fill-opacity="0.68"/><ellipse cx="431.5" cy="204.5" rx="52.6" ry="2.40" transform="rotate(-20.22 431.5 204.5)" fill="rgb(200,200,200)" fill-opacity="0.6"/><ellipse cx="280.5" cy="206.0" rx="41.8" ry="2.40" transform="rotate(7.21 280.5 206.0)" fill="rgb(200,200,200)" fill-opacity="0.6"/><ellipse cx="398.5" cy="303.5" rx="31.2" ry="2.15" transform="rotate(-12.85 398.5 303.5)" fill="rgb(225,225,225)" fill-opacity="0.83"/><ellipse cx="458.5" cy="249.0" rx="22.1" ry="2.40" transform="rotate(-14.38 458.5 249.0)" fill="rgb(210,210,210)" fill-opacity="0.75"/><ellipse cx="412.5" cy="346.0" rx="29.0" ry="2.15" transform="rotate(-10.68 412.5 346.0)" fill="rgb(200,200,200)" fill-opacity="0.6"/><ellipse cx="32.5" cy="306.0" rx="32.8" ry="2.15" transform="rotate(16.97 32.5 306.0)" fill="rgb(220,220,220)" fill-opacity="0.75"/><ellipse cx="23.5" cy="325.5" rx="19.7" ry="2.15" transform="rotate(8.13 23.5 325.5)" fill="rgb(210,210,210)" fill-opacity="0.68"/><ellipse cx="23.0" cy="341.5" rx="16.4" ry="2.15" transform="rotate(14.04 23.0 341.5)" fill="rgb(210,210,210)" fill-opacity="0.6"/><ellipse cx="137.0" cy="291.0" rx="52.1" ry="1.90" transform="rotate(3.43 137.0 291.0)" fill="rgb(190,190,190)" fill-opacity="0.52"/><ellipse cx="450.0" cy="251.0" rx="29.7" ry="2.40" transform="rotate(-12.53 450.0 251.0)" fill="rgb(215,215,215)" fill-opacity="0.7"/><ellipse cx="389.5" cy="273.5" rx="9.6" ry="1.90" transform="rotate(-11.31 389.5 273.5)" fill="rgb(210,210,210)" fill-opacity="0.6"/><ellipse cx="451.5" cy="275.0" rx="27.7" ry="1.90" transform="rotate(-6.71 451.5 275.0)" fill="rgb(210,210,210)" fill-opacity="0.6"/><ellipse cx="466.5" cy="325.0" rx="12.9" ry="2.90" transform="rotate(-15.95 466.5 325.0)" fill="rgb(220,220,220)" fill-opacity="0.7"/><ellipse cx="378.0" cy="310.0" rx="21.9" ry="1.90" transform="rotate(-17.53 378.0 310.0)" fill="rgb(200,200,200)" fill-opacity="0.5"/><ellipse cx="300.0" cy="232.5" rx="17.1" ry="1.90" transform="rotate(5.71 300.0 232.5)" fill="rgb(190,190,190)" fill-opacity="0.5"/><ellipse cx="31.5" cy="309.5" rx="34.2" ry="1.90" transform="rotate(11.66 31.5 309.5)" fill="rgb(210,210,210)" fill-opacity="0.55"/><ellipse cx="23.5" cy="348.5" rx="20.6" ry="1.90" transform="rotate(4.64 23.5 348.5)" fill="rgb(210,210,210)" fill-opacity="0.55"/><ellipse cx="27.0" cy="365.0" rx="22.0" ry="1.90" transform="rotate(2.86 27.0 365.0)" fill="rgb(200,200,200)" fill-opacity="0.45"/><ellipse cx="49.0" cy="272.5" rx="9.4" ry="1.90" transform="rotate(19.65 49.0 272.5)" fill="rgb(220,220,220)" fill-opacity="0.6"/><ellipse cx="325.0" cy="294.0" rx="22.0" ry="1.90" transform="rotate(2.86 325.0 294.0)" fill="rgb(200,200,200)" fill-opacity="0.5"/><line x1="2" y1="22" x2="479" y2="24" stroke="rgb(60,60,60)" stroke-width="6" stroke-opacity="0.35" stroke-linecap="round"/><line x1="390" y1="297" x2="435" y2="288" stroke="rgb(0,0,0)" stroke-width="2.5" stroke-opacity="0.6" stroke-linecap="round"/></g>
<path d="M125.0,40.4 C131.6,40.6 138.5,40.7 144.5,43.3 C150.5,45.9 156.8,50.8 161.0,56.0 C165.2,61.2 167.8,68.6 169.8,74.8 C171.8,81.1 172.0,86.2 173.0,93.5 C174.0,100.8 176.0,111.1 176.0,118.4 C176.0,125.6 175.3,130.2 173.0,137.0 C170.7,143.8 166.4,152.5 162.0,159.0 C157.6,165.5 152.7,171.6 146.5,176.0 C140.3,180.4 132.4,183.8 124.6,185.4 C116.8,187.0 107.5,186.2 99.7,185.4 C91.9,184.6 85.7,182.8 77.9,180.7 C70.1,178.6 60.3,176.1 53.0,173.0 C45.7,169.9 39.5,166.2 34.3,162.0 C29.1,157.8 25.4,153.2 21.8,148.0 C18.2,142.8 14.7,137.4 12.5,130.9 C10.3,124.4 8.6,115.3 8.7,109.0 C8.8,102.7 10.1,98.2 13.0,93.0 C15.9,87.8 20.7,82.4 26.0,78.0 C31.3,73.6 38.5,70.3 45.0,66.5 C51.5,62.7 58.3,58.3 65.0,55.0 C71.7,51.7 78.3,48.7 85.0,46.5 C91.7,44.3 98.3,43.0 105.0,42.0 C111.7,41.0 118.4,40.2 125.0,40.4Z" fill="#000" filter="url(#bblur)" transform="translate(92.3,113.5) scale(0.92,0.93) translate(-95.8,-111.0)"/>
<path d="M125.0,40.4 C131.6,40.6 138.5,40.7 144.5,43.3 C150.5,45.9 156.8,50.8 161.0,56.0 C165.2,61.2 167.8,68.6 169.8,74.8 C171.8,81.1 172.0,86.2 173.0,93.5 C174.0,100.8 176.0,111.1 176.0,118.4 C176.0,125.6 175.3,130.2 173.0,137.0 C170.7,143.8 166.4,152.5 162.0,159.0 C157.6,165.5 152.7,171.6 146.5,176.0 C140.3,180.4 132.4,183.8 124.6,185.4 C116.8,187.0 107.5,186.2 99.7,185.4 C91.9,184.6 85.7,182.8 77.9,180.7 C70.1,178.6 60.3,176.1 53.0,173.0 C45.7,169.9 39.5,166.2 34.3,162.0 C29.1,157.8 25.4,153.2 21.8,148.0 C18.2,142.8 14.7,137.4 12.5,130.9 C10.3,124.4 8.6,115.3 8.7,109.0 C8.8,102.7 10.1,98.2 13.0,93.0 C15.9,87.8 20.7,82.4 26.0,78.0 C31.3,73.6 38.5,70.3 45.0,66.5 C51.5,62.7 58.3,58.3 65.0,55.0 C71.7,51.7 78.3,48.7 85.0,46.5 C91.7,44.3 98.3,43.0 105.0,42.0 C111.7,41.0 118.4,40.2 125.0,40.4Z" fill="rgb(0,104,170)" opacity="0.56"/>
</g>
<rect x="0.5" y="0.5" width="478" height="409" fill="none" stroke="#8a8a8a" stroke-width="1"/>
<rect x="1.3" y="1.3" width="11.6" height="6.6" fill="none" stroke="#000" stroke-width="1.1"/>
<rect x="3.6" y="1" width="1.1" height="5.6" fill="#000"/>
<ellipse cx="8.2" cy="3.3" rx="1.6" ry="1.8" fill="#000"/>
<rect x="5" y="6.1" width="7.5" height="1.5" fill="#000"/>
<line x1="1.4" y1="9.5" x2="1.4" y2="16.5" stroke="#000" stroke-width="1.1"/>
</svg>
<div style="position:absolute;left:377px;top:144px;width:20px;height:20px;background:#0070c0"></div>
<div style="position:absolute;left:0px;top:635px;width:1019px;height:23px;background:#e6e6e6"></div>
<div style="position:absolute;left:0px;top:635px;width:1019px;height:1px;background:#b4b4b4"></div>
<div style="position:absolute;left:170px;top:635px;width:1px;height:23px;background:#a6a6a6"></div>
<svg style="position:absolute;left:5px;top:639px" width="14" height="16"><rect x="2" y="2" width="2.5" height="12" fill="#8c8c8c"/><polygon points="4.5,8 11,2 11,14" fill="#8c8c8c"/></svg>
<svg style="position:absolute;left:828px;top:639px" width="18" height="17">
<rect x="1.5" y="1.5" width="11" height="9" fill="none" stroke="#777" stroke-width="1"/>
<rect x="3.5" y="4.5" width="13" height="11" fill="#e6e6e6" stroke="#555" stroke-width="1"/>
<rect x="5.5" y="6.5" width="9" height="7" fill="none" stroke="#555" stroke-width="1"/>
<path d="M6,12 l2.5,-2.5 l2,1.5 l3,-3" fill="none" stroke="#555" stroke-width="0.8"/>
</svg>
<div style="position:absolute;left:849.0px;top:640.54px;font-size:12px;line-height:12px;color:#222;font-weight:normal;letter-spacing:0px;white-space:nowrap;">Image Sequence Session (2-D)</div>
<svg style="position:absolute;left:0;top:648px" width="10" height="10"><path d="M0,0 Q0,10 10,10 L0,10z" fill="#000"/></svg>
<svg style="position:absolute;left:1009px;top:648px" width="10" height="10"><path d="M10,0 Q10,10 0,10 L10,10z" fill="#000"/></svg>
<svg style="position:absolute;left:20px;top:37px" width="28" height="28" viewBox="0 0 28 28"><path d="M10.5,2.5 h7 v8 h8 v7 h-8 v8 h-7 v-8 h-8 v-7 h8z" fill="#fde68c" stroke="#6e5410" stroke-width="1.1" stroke-linejoin="round"/></svg>
<svg style="position:absolute;left:85px;top:40px" width="28" height="22" viewBox="0 0 28 22"><path d="M4.5,19.5 V2.5 h8 l2,2 h11 v15z" fill="#f7e498" stroke="#6e5410" stroke-width="1"/>
<path d="M2.5,7.5 h20 l3,12 h-20z" fill="#fdf1b8" stroke="#6e5410" stroke-width="1" stroke-linejoin="round"/></svg>
<svg style="position:absolute;left:150px;top:38px" width="26" height="26" viewBox="0 0 26 26"><path d="M2.5,1.5 h20 a1,1 0 0 1 1,1 v20 a1,1 0 0 1 -1,1 h-18 l-2,-2 z" fill="#dcdcdc" stroke="#6a6a6a" stroke-width="1"/>
<rect x="4.5" y="1.5" width="16" height="11" fill="#fff" stroke="#6a6a6a" stroke-width="1"/>
<rect x="5.5" y="15.5" width="14" height="8" fill="#fff" stroke="#6a6a6a" stroke-width="1"/>
<rect x="8" y="18" width="3" height="6" fill="#555"/></svg>
<svg style="position:absolute;left:206px;top:37px" width="28" height="28" viewBox="0 0 28 28"><rect x="2.5" y="16.5" width="23" height="9" fill="#fff" stroke="#777" stroke-width="1"/>
<circle cx="22" cy="21" r="1.6" fill="#e8f8e0" stroke="#1a9a1a" stroke-width="1"/>
<path d="M5,2 C11,1 15,5 15,11 h5 l-7,10 l-7,-10 h5 C11,7 9,4 5,2z" fill="#c4f4b0" stroke="#1a9a1a" stroke-width="1.1" stroke-linejoin="round"/></svg>
<svg style="position:absolute;left:263.5px;top:36.5px" width="28" height="28" viewBox="0 0 28 28"><g stroke="#c6c6c6" stroke-width="1.2"><line x1="20.30" y1="14.00" x2="25.00" y2="14.00"/><line x1="18.45" y1="18.45" x2="21.78" y2="21.78"/><line x1="14.00" y1="20.30" x2="14.00" y2="25.00"/><line x1="9.55" y1="18.45" x2="6.22" y2="21.78"/><line x1="7.70" y1="14.00" x2="3.00" y2="14.00"/><line x1="9.55" y1="9.55" x2="6.22" y2="6.22"/><line x1="14.00" y1="7.70" x2="14.00" y2="3.00"/><line x1="18.45" y1="9.55" x2="21.78" y2="6.22"/></g>
<circle cx="14" cy="14" r="4.6" fill="#fafafa" stroke="#c0c0c0" stroke-width="0.9"/>
<path d="M14,9.4 a4.6,4.6 0 0 0 0,9.2z" fill="#c4c4c4"/></svg>
<svg style="position:absolute;left:458px;top:68px" width="120" height="22" viewBox="0 0 120 22"><defs><linearGradient id="trk" x1="0" y1="0" x2="0" y2="1"><stop offset="0" stop-color="#2e2e2e"/><stop offset="0.55" stop-color="#5a5a5a"/><stop offset="1" stop-color="#a8a8a8"/></linearGradient>
<linearGradient id="thm" x1="0" y1="0" x2="0" y2="1"><stop offset="0" stop-color="#f6f6f6"/><stop offset="1" stop-color="#c9c9c9"/></linearGradient></defs>
<rect x="2" y="9" width="115" height="6" fill="url(#trk)"/>
<path d="M54.5,4.5 a1.5,1.5 0 0 1 1.5,-1.5 h9.5 a1.5,1.5 0 0 1 1.5,1.5 v8 l-6.25,6.5 l-6.25,-6.5z" fill="url(#thm)" stroke="#5a5a5a" stroke-width="0.9"/></svg>
<svg style="position:absolute;left:600px;top:38px" width="27" height="27" viewBox="0 0 27 27"><rect x="1.5" y="1.5" width="18" height="18" rx="2" fill="#fff" stroke="#555" stroke-width="1"/>
<line x1="4" y1="4.6" x2="14" y2="4.6" stroke="#b32020" stroke-width="1"/>
<line x1="4" y1="7.5" x2="17" y2="7.5" stroke="#666" stroke-width="1"/>
<line x1="4" y1="13.6" x2="11" y2="13.6" stroke="#666" stroke-width="1"/>
<line x1="4" y1="16.5" x2="10" y2="16.5" stroke="#666" stroke-width="1"/>
<rect x="10.5" y="10.5" width="14.5" height="14.5" rx="2" fill="#fff" stroke="#555" stroke-width="1"/>
<g stroke="#555" stroke-width="1"><line x1="13" y1="17.5" x2="16" y2="17.5"/><line x1="19" y1="17.5" x2="22.5" y2="17.5"/><line x1="17.5" y1="13" x2="17.5" y2="16"/><line x1="17.5" y1="19" x2="17.5" y2="22.5"/></g></svg>
<svg style="position:absolute;left:643px;top:47px" width="18" height="18" viewBox="0 0 18 18"><rect x="1.5" y="1.5" width="15" height="15" rx="1" fill="#fff" stroke="#555" stroke-width="1.1"/>
<path d="M7.2,3.4 L14.7,3.4 L14.7,10.9 Z" fill="#5a5a5a"/>
<path d="M11.2,7.2 C7.8,9.6 6.6,11.6 8.4,14.2" fill="none" stroke="#5a5a5a" stroke-width="2.3"/></svg>
<svg style="position:absolute;left:642.5px;top:70.3px" width="18" height="18" viewBox="0 0 18 18"><defs><radialGradient id="gr" cx="0.5" cy="0.5" r="0.5"><stop offset="0" stop-color="#8a8a8a"/><stop offset="0.45" stop-color="#c4c4c4"/><stop offset="0.7" stop-color="#e2e2e2"/><stop offset="1" stop-color="#d0d0d0"/></radialGradient></defs>
<polygon points="7.51,3.81 7.72,1.71 10.28,1.71 10.49,3.81 11.62,4.28 13.24,2.94 15.06,4.76 13.72,6.38 14.19,7.51 16.29,7.72 16.29,10.28 14.19,10.49 13.72,11.62 15.06,13.24 13.24,15.06 11.62,13.72 10.49,14.19 10.28,16.29 7.72,16.29 7.51,14.19 6.38,13.72 4.76,15.06 2.94,13.24 4.28,11.62 3.81,10.49 1.71,10.28 1.71,7.72 3.81,7.51 4.28,6.38 2.94,4.76 4.76,2.94 6.38,4.28" fill="url(#gr)" stroke="#5a5a5a" stroke-width="1.1" stroke-linejoin="round"/>
<circle cx="9" cy="9" r="1.4" fill="#555"/></svg>
<svg style="position:absolute;left:773px;top:38px" width="25" height="25" viewBox="0 0 25 25"><rect x="1.5" y="1.5" width="22" height="22" rx="2.5" fill="#d9d9d9" stroke="#555" stroke-width="1.1"/>
<circle cx="12.5" cy="12.3" r="8.7" fill="#a0a0a0" stroke="#333" stroke-width="1"/>
<circle cx="12.5" cy="12.3" r="6.2" fill="#2e2e2e"/>
<circle cx="9.3" cy="9.5" r="1.6" fill="#fff"/>
<circle cx="20.5" cy="4.4" r="1.3" fill="#2e2e2e"/></svg>
<svg style="position:absolute;left:839px;top:43px" width="27" height="16" viewBox="0 0 27 16"><rect x="1.5" y="1.3" width="17.5" height="13.4" rx="1.5" fill="#dcdcdc" stroke="#555" stroke-width="1.1"/>
<rect x="3.5" y="7.4" width="12" height="5.4" fill="#fff" stroke="#555" stroke-width="1"/>
<rect x="13.2" y="3.2" width="2.8" height="2.8" fill="#2aa52a" stroke="#0a7a0a" stroke-width="0.6"/>
<path d="M19,6 l3,-3 v10 l-3,-3z" fill="#cfcfcf" stroke="#555" stroke-width="1"/>
<rect x="22.5" y="2.2" width="2.5" height="11.6" rx="1" fill="#e6e6e6" stroke="#555" stroke-width="1"/></svg>
<svg style="position:absolute;left:900px;top:38px" width="27" height="26" viewBox="0 0 27 26"><rect x="1.3" y="1.5" width="18.5" height="14" fill="#d9d9d9" stroke="#777" stroke-width="1.1"/>
<rect x="3.8" y="4" width="13.5" height="8.5" fill="#fff" stroke="#888" stroke-width="1"/>
<path d="M4,6.5 l3,1 l2.5,2.5 l2.5,-1.5" fill="none" stroke="#666" stroke-width="0.9"/>
<circle cx="14" cy="7.3" r="1" fill="#555"/>
<rect x="10.3" y="9.5" width="14.5" height="14.5" rx="2.5" fill="#fff" stroke="#777" stroke-width="1.1"/>
<path d="M12.5,22 C12.5,17 15,14.5 18.5,14.5 V11.8 l4.3,4.4 l-4.3,4.4 V17.8 C16,17.8 14,19 12.5,22z" fill="#c8f5b8" stroke="#139a13" stroke-width="1.1" stroke-linejoin="round"/></svg>
<svg style="position:absolute;left:954px;top:38px" width="27" height="27" viewBox="0 0 27 27"><rect x="1.5" y="15.3" width="23" height="9.3" fill="#f7f7f7" stroke="#666" stroke-width="1"/>
<circle cx="21" cy="19.8" r="1.8" fill="#d9f3d0" stroke="#1a9a1a" stroke-width="1"/>
<path d="M4.5,18.5 C4.5,11 8.5,7.4 13,7.4 V2.3 l10.7,7.1 l-10.7,8 V12 C9.5,12 6,14 4.5,18.5z" fill="#c8f7b8" stroke="#159c15" stroke-width="1.1" stroke-linejoin="round"/></svg>
<svg style="position:absolute;left:355px;top:143px" width="24" height="22" viewBox="0 0 24 22"><path d="M9,2.3 C10.5,0.8 16,0.8 18.9,3 C20.5,4.5 20.5,7 19.6,7.4 C18.5,8.8 17.5,9.2 16.7,9.6 C15.5,10.2 14.5,10.5 14.1,11 L13,14.7 C11.5,15.3 10,15.2 9,15 C6.5,14.8 4.5,14.5 3.9,14 C2,13 1,12 1.4,11 C1.2,9.8 1.8,8.8 2.5,8.5 C4,7.8 5.5,7.6 6.8,7.4 C7.5,6.5 7.5,5.5 8,4.8 C8.3,3.8 8.6,2.8 9,2.3 Z" fill="#a8a8a8" stroke="#f4f4f4" stroke-width="1.2"/>
<path d="M13,12.1 L13.4,19.4 L15.2,17.6 L17,21 L18.5,20.2 L16.8,16.9 L19.6,16.3 Z" fill="#fff" stroke="#111" stroke-width="0.4"/></svg>
</body></html>
